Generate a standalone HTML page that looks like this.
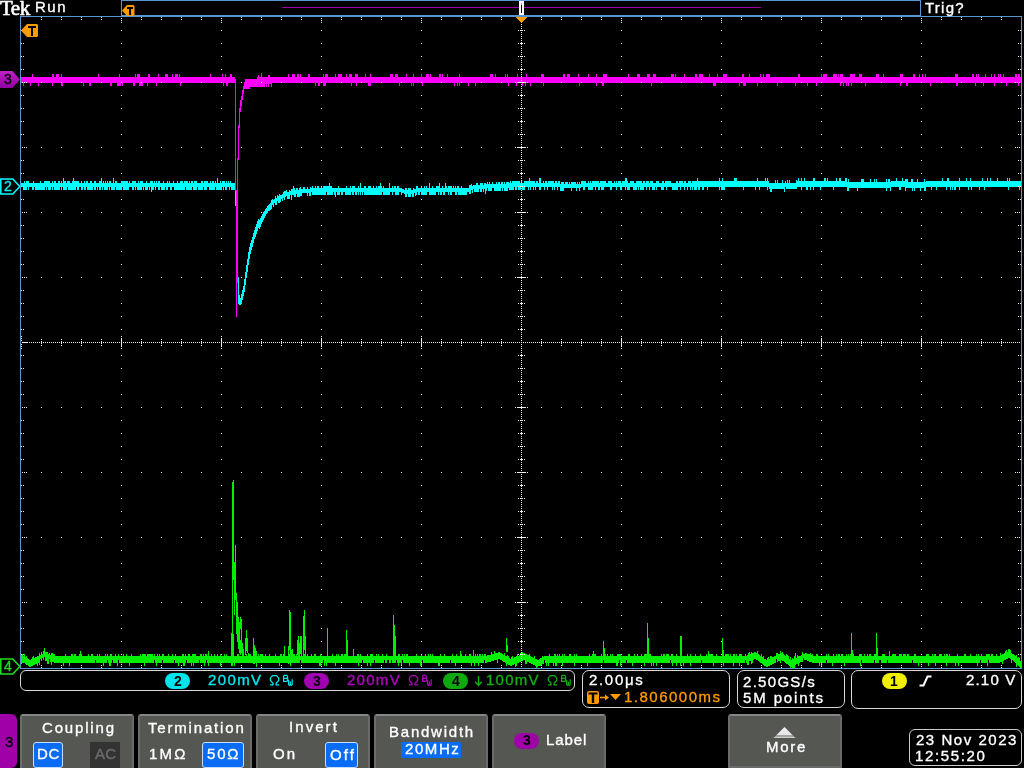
<!DOCTYPE html>
<html><head><meta charset="utf-8">
<style>
html,body{margin:0;padding:0;background:#000;}
body{width:1024px;height:768px;overflow:hidden;position:relative;font-family:"Liberation Sans",sans-serif;color:#fff;}
.t{position:absolute;white-space:nowrap;line-height:1;will-change:transform;}
.btn{position:absolute;top:714px;height:54px;width:114px;background:#555753;box-sizing:border-box;border-top:2px solid #868686;border-left:2px solid #6c6c6c;border-right:2px solid #6a6a6a;border-radius:3px 3px 0 0;}
.box{position:absolute;border:1px solid #d8d8d8;box-sizing:border-box;}
.pill{position:absolute;border-radius:8px;}
</style></head><body>
<svg width="1024" height="768" viewBox="0 0 1024 768" shape-rendering="crispEdges" style="position:absolute;left:0;top:0">
<path fill="#00ffff" d="M21 183v4h1v-4zM22 183v4h1v-4zM23 183v7h1v-7zM24 181v9h1v-9zM25 183v7h1v-7zM26 181v9h1v-9zM27 181v6h1v-6zM28 181v9h1v-9zM29 183v4h1v-4zM30 183v4h1v-4zM31 183v4h1v-4zM32 183v7h1v-7zM33 181v9h1v-9zM34 183v4h1v-4zM35 183v7h1v-7zM36 183v7h1v-7zM37 183v7h1v-7zM38 183v7h1v-7zM39 183v7h1v-7zM40 181v9h1v-9zM41 183v7h1v-7zM42 183v7h1v-7zM43 183v7h1v-7zM44 181v9h1v-9zM45 181v6h1v-6zM46 181v9h1v-9zM47 181v6h1v-6zM48 181v9h1v-9zM49 181v9h1v-9zM50 183v7h1v-7zM51 183v4h1v-4zM52 181v9h1v-9zM53 183v4h1v-4zM54 181v9h1v-9zM55 181v9h1v-9zM56 183v7h1v-7zM57 183v7h1v-7zM58 181v9h1v-9zM59 181v9h1v-9zM60 183v4h1v-4zM61 181v9h1v-9zM62 183v4h1v-4zM63 178v12h1v-12zM64 181v9h1v-9zM65 181v9h1v-9zM66 183v7h1v-7zM67 181v6h1v-6zM68 181v9h1v-9zM69 181v9h1v-9zM70 183v7h1v-7zM71 183v7h1v-7zM72 181v9h1v-9zM73 178v12h1v-12zM74 181v9h1v-9zM75 181v9h1v-9zM76 181v6h1v-6zM77 181v9h1v-9zM78 181v9h1v-9zM79 183v4h1v-4zM80 183v4h1v-4zM81 181v9h1v-9zM82 183v7h1v-7zM83 183v4h1v-4zM84 181v9h1v-9zM85 183v7h1v-7zM86 181v6h1v-6zM87 181v9h1v-9zM88 183v7h1v-7zM89 183v7h1v-7zM90 181v9h1v-9zM91 181v9h1v-9zM92 183v7h1v-7zM93 183v4h1v-4zM94 181v9h1v-9zM95 181v9h1v-9zM96 183v4h1v-4zM97 183v7h1v-7zM98 183v4h1v-4zM99 181v9h1v-9zM100 181v9h1v-9zM101 178v9h1v-9zM102 183v7h1v-7zM103 181v6h1v-6zM104 183v7h1v-7zM105 181v9h1v-9zM106 183v7h1v-7zM107 181v9h1v-9zM108 183v4h1v-4zM109 181v9h1v-9zM110 181v6h1v-6zM111 183v7h1v-7zM112 183v7h1v-7zM113 178v12h1v-12zM114 183v7h1v-7zM115 181v6h1v-6zM116 181v9h1v-9zM117 183v7h1v-7zM118 183v7h1v-7zM119 183v7h1v-7zM120 183v7h1v-7zM121 181v9h1v-9zM122 181v6h1v-6zM123 181v9h1v-9zM124 181v9h1v-9zM125 181v9h1v-9zM126 181v9h1v-9zM127 181v9h1v-9zM128 183v7h1v-7zM129 181v6h1v-6zM130 183v4h1v-4zM131 183v4h1v-4zM132 181v9h1v-9zM133 181v9h1v-9zM134 181v6h1v-6zM135 181v9h1v-9zM136 183v4h1v-4zM137 183v7h1v-7zM138 181v9h1v-9zM139 183v7h1v-7zM140 181v9h1v-9zM141 181v9h1v-9zM142 181v6h1v-6zM143 183v7h1v-7zM144 183v4h1v-4zM145 183v7h1v-7zM146 181v9h1v-9zM147 183v7h1v-7zM148 183v4h1v-4zM149 183v7h1v-7zM150 181v6h1v-6zM151 181v11h1v-11zM152 181v9h1v-9zM153 183v7h1v-7zM154 181v6h1v-6zM155 183v7h1v-7zM156 181v6h1v-6zM157 183v4h1v-4zM158 181v9h1v-9zM159 181v9h1v-9zM160 183v4h1v-4zM161 183v7h1v-7zM162 183v7h1v-7zM163 181v9h1v-9zM164 183v7h1v-7zM165 183v4h1v-4zM166 183v7h1v-7zM167 181v9h1v-9zM168 183v4h1v-4zM169 181v6h1v-6zM170 183v7h1v-7zM171 183v7h1v-7zM172 183v4h1v-4zM173 181v6h1v-6zM174 183v7h1v-7zM175 183v7h1v-7zM176 183v7h1v-7zM177 181v9h1v-9zM178 183v7h1v-7zM179 183v7h1v-7zM180 181v9h1v-9zM181 181v9h1v-9zM182 181v9h1v-9zM183 183v7h1v-7zM184 181v9h1v-9zM185 181v6h1v-6zM186 181v9h1v-9zM187 181v9h1v-9zM188 183v7h1v-7zM189 181v9h1v-9zM190 183v7h1v-7zM191 181v9h1v-9zM192 181v6h1v-6zM193 183v7h1v-7zM194 181v9h1v-9zM195 181v9h1v-9zM196 181v9h1v-9zM197 183v4h1v-4zM198 183v7h1v-7zM199 183v7h1v-7zM200 183v7h1v-7zM201 181v9h1v-9zM202 181v9h1v-9zM203 183v4h1v-4zM204 181v9h1v-9zM205 181v9h1v-9zM206 181v9h1v-9zM207 181v6h1v-6zM208 183v4h1v-4zM209 183v7h1v-7zM210 181v9h1v-9zM211 183v7h1v-7zM212 181v9h1v-9zM213 181v9h1v-9zM214 183v7h1v-7zM215 181v6h1v-6zM216 183v7h1v-7zM217 178v12h1v-12zM218 183v7h1v-7zM219 183v7h1v-7zM220 181v9h1v-9zM221 183v7h1v-7zM222 181v6h1v-6zM223 181v9h1v-9zM224 181v6h1v-6zM225 183v7h1v-7zM226 181v9h1v-9zM227 183v4h1v-4zM228 181v6h1v-6zM229 183v7h1v-7zM230 181v6h1v-6zM231 183v7h1v-7zM232 183v7h1v-7zM233 183v7h1v-7zM234 183v7h1v-7zM235 186v20h1v-20zM238 277v27h1v-27zM239 295v10h1v-10zM240 298v7h1v-7zM241 294v10h1v-10zM242 290v10h1v-10zM243 286v10h1v-10zM244 279v13h1v-13zM245 272v13h1v-13zM246 265v13h1v-13zM247 259v13h1v-13zM248 252v13h1v-13zM249 247v12h1v-12zM250 243v11h1v-11zM251 240v10h1v-10zM252 237v10h1v-10zM253 233v10h1v-10zM254 230v9h1v-9zM255 227v10h1v-10zM256 224v10h1v-10zM257 221v10h1v-10zM258 219v9h1v-9zM259 220v9h1v-9zM260 218v9h1v-9zM261 216v8h1v-8zM262 214v8h1v-8zM263 212v8h1v-8zM264 211v7h1v-7zM265 209v7h1v-7zM266 208v6h1v-6zM267 206v7h1v-7zM268 205v6h1v-6zM269 204v7h1v-7zM270 203v7h1v-7zM271 200v9h1v-9zM272 199v6h1v-6zM273 200v7h1v-7zM274 199v4h1v-4zM275 196v9h1v-9zM276 198v7h1v-7zM277 195v6h1v-6zM278 196v7h1v-7zM279 194v9h1v-9zM280 195v7h1v-7zM281 195v4h1v-4zM282 194v7h1v-7zM283 192v6h1v-6zM284 191v9h1v-9zM285 191v6h1v-6zM286 190v6h1v-6zM287 192v7h1v-7zM288 192v7h1v-7zM289 190v9h1v-9zM290 191v4h1v-4zM291 189v11h1v-11zM292 189v6h1v-6zM293 186v9h1v-9zM294 188v9h1v-9zM295 190v7h1v-7zM296 188v6h1v-6zM297 188v9h1v-9zM298 190v7h1v-7zM299 188v9h1v-9zM300 187v9h1v-9zM301 189v7h1v-7zM302 189v4h1v-4zM303 187v6h1v-6zM304 187v6h1v-6zM305 189v4h1v-4zM306 189v4h1v-4zM307 187v9h1v-9zM308 189v4h1v-4zM309 189v7h1v-7zM310 187v9h1v-9zM311 188v4h1v-4zM312 186v9h1v-9zM313 188v7h1v-7zM314 188v7h1v-7zM315 186v9h1v-9zM316 188v7h1v-7zM317 186v9h1v-9zM318 186v9h1v-9zM319 188v7h1v-7zM320 188v7h1v-7zM321 186v9h1v-9zM322 188v7h1v-7zM323 186v9h1v-9zM324 186v9h1v-9zM325 186v9h1v-9zM326 186v6h1v-6zM327 186v9h1v-9zM328 186v9h1v-9zM329 183v12h1v-12zM330 186v9h1v-9zM331 186v9h1v-9zM332 188v7h1v-7zM333 188v4h1v-4zM334 188v7h1v-7zM335 188v9h1v-9zM336 188v4h1v-4zM337 188v7h1v-7zM338 186v9h1v-9zM339 188v7h1v-7zM340 188v4h1v-4zM341 188v7h1v-7zM342 188v7h1v-7zM343 188v4h1v-4zM344 188v4h1v-4zM345 188v7h1v-7zM346 186v9h1v-9zM347 188v7h1v-7zM348 188v7h1v-7zM349 188v7h1v-7zM350 186v9h1v-9zM351 188v4h1v-4zM352 186v9h1v-9zM353 186v9h1v-9zM354 186v6h1v-6zM355 188v7h1v-7zM356 188v7h1v-7zM357 188v4h1v-4zM358 186v9h1v-9zM359 188v4h1v-4zM360 183v12h1v-12zM361 188v4h1v-4zM362 188v7h1v-7zM363 188v4h1v-4zM364 186v9h1v-9zM365 186v9h1v-9zM366 188v7h1v-7zM367 188v7h1v-7zM368 186v9h1v-9zM369 186v9h1v-9zM370 186v9h1v-9zM371 188v7h1v-7zM372 188v7h1v-7zM373 186v9h1v-9zM374 188v7h1v-7zM375 188v7h1v-7zM376 186v9h1v-9zM377 188v7h1v-7zM378 186v9h1v-9zM379 186v9h1v-9zM380 183v12h1v-12zM381 186v9h1v-9zM382 188v4h1v-4zM383 186v9h1v-9zM384 188v7h1v-7zM385 188v7h1v-7zM386 188v7h1v-7zM387 188v7h1v-7zM388 188v7h1v-7zM389 183v12h1v-12zM390 188v4h1v-4zM391 188v4h1v-4zM392 186v9h1v-9zM393 188v4h1v-4zM394 186v6h1v-6zM395 186v9h1v-9zM396 188v7h1v-7zM397 186v9h1v-9zM398 186v9h1v-9zM399 188v4h1v-4zM400 188v4h1v-4zM401 188v7h1v-7zM402 189v4h1v-4zM403 189v4h1v-4zM404 190v4h1v-4zM405 188v9h1v-9zM406 188v9h1v-9zM407 190v4h1v-4zM408 188v9h1v-9zM409 188v9h1v-9zM410 188v9h1v-9zM411 190v4h1v-4zM412 190v7h1v-7zM413 188v9h1v-9zM414 189v4h1v-4zM415 189v7h1v-7zM416 186v9h1v-9zM417 186v6h1v-6zM418 188v7h1v-7zM419 188v7h1v-7zM420 188v4h1v-4zM421 186v9h1v-9zM422 188v7h1v-7zM423 188v7h1v-7zM424 186v9h1v-9zM425 188v7h1v-7zM426 186v9h1v-9zM427 188v4h1v-4zM428 188v4h1v-4zM429 183v12h1v-12zM430 188v7h1v-7zM431 188v7h1v-7zM432 186v9h1v-9zM433 188v7h1v-7zM434 188v7h1v-7zM435 188v7h1v-7zM436 186v6h1v-6zM437 186v6h1v-6zM438 186v9h1v-9zM439 183v9h1v-9zM440 188v7h1v-7zM441 188v7h1v-7zM442 186v6h1v-6zM443 188v7h1v-7zM444 188v7h1v-7zM445 183v9h1v-9zM446 186v6h1v-6zM447 188v4h1v-4zM448 186v9h1v-9zM449 186v6h1v-6zM450 186v9h1v-9zM451 186v9h1v-9zM452 188v4h1v-4zM453 186v6h1v-6zM454 188v4h1v-4zM455 186v9h1v-9zM456 188v7h1v-7zM457 186v6h1v-6zM458 186v9h1v-9zM459 188v7h1v-7zM460 188v7h1v-7zM461 186v9h1v-9zM462 188v7h1v-7zM463 188v7h1v-7zM464 188v7h1v-7zM465 188v7h1v-7zM466 188v7h1v-7zM467 188v4h1v-4zM468 188v4h1v-4zM469 185v9h1v-9zM470 185v9h1v-9zM471 184v6h1v-6zM472 186v7h1v-7zM473 185v4h1v-4zM474 185v7h1v-7zM475 185v7h1v-7zM476 183v9h1v-9zM477 183v9h1v-9zM478 185v7h1v-7zM479 185v4h1v-4zM480 183v9h1v-9zM481 183v9h1v-9zM482 183v6h1v-6zM483 185v7h1v-7zM484 183v6h1v-6zM485 183v11h1v-11zM486 184v7h1v-7zM487 182v6h1v-6zM488 184v7h1v-7zM489 182v9h1v-9zM490 184v7h1v-7zM491 184v7h1v-7zM492 182v6h1v-6zM493 184v4h1v-4zM494 184v7h1v-7zM495 184v7h1v-7zM496 182v9h1v-9zM497 184v7h1v-7zM498 182v9h1v-9zM499 182v9h1v-9zM500 184v7h1v-7zM501 182v6h1v-6zM502 182v9h1v-9zM503 184v4h1v-4zM504 182v9h1v-9zM505 184v7h1v-7zM506 182v9h1v-9zM507 182v9h1v-9zM508 182v6h1v-6zM509 183v7h1v-7zM510 181v9h1v-9zM511 183v7h1v-7zM512 181v9h1v-9zM513 181v9h1v-9zM514 181v6h1v-6zM515 181v9h1v-9zM516 181v9h1v-9zM517 181v6h1v-6zM518 181v9h1v-9zM519 181v9h1v-9zM520 183v7h1v-7zM521 181v6h1v-6zM522 183v7h1v-7zM523 183v7h1v-7zM524 181v9h1v-9zM525 181v6h1v-6zM526 181v6h1v-6zM527 181v6h1v-6zM528 181v9h1v-9zM529 178v9h1v-9zM530 181v9h1v-9zM531 181v6h1v-6zM532 181v6h1v-6zM533 181v9h1v-9zM534 181v6h1v-6zM535 183v7h1v-7zM536 181v6h1v-6zM537 181v6h1v-6zM538 183v4h1v-4zM539 178v12h1v-12zM540 178v12h1v-12zM541 183v4h1v-4zM542 183v4h1v-4zM543 181v6h1v-6zM544 183v7h1v-7zM545 181v6h1v-6zM546 181v6h1v-6zM547 183v7h1v-7zM548 181v6h1v-6zM549 181v6h1v-6zM550 181v6h1v-6zM551 181v6h1v-6zM552 181v9h1v-9zM553 181v6h1v-6zM554 183v7h1v-7zM555 181v6h1v-6zM556 181v6h1v-6zM557 183v7h1v-7zM558 181v6h1v-6zM559 181v6h1v-6zM560 184v7h1v-7zM561 182v9h1v-9zM562 182v9h1v-9zM563 182v9h1v-9zM564 184v4h1v-4zM565 182v6h1v-6zM566 182v6h1v-6zM567 182v6h1v-6zM568 184v4h1v-4zM569 182v6h1v-6zM570 184v4h1v-4zM571 182v9h1v-9zM572 182v6h1v-6zM573 182v6h1v-6zM574 182v6h1v-6zM575 182v6h1v-6zM576 184v7h1v-7zM577 182v6h1v-6zM578 184v4h1v-4zM579 182v9h1v-9zM580 184v4h1v-4zM581 181v6h1v-6zM582 181v6h1v-6zM583 181v9h1v-9zM584 181v9h1v-9zM585 181v6h1v-6zM586 183v4h1v-4zM587 183v4h1v-4zM588 181v9h1v-9zM589 183v7h1v-7zM590 181v9h1v-9zM591 183v7h1v-7zM592 181v9h1v-9zM593 181v6h1v-6zM594 181v6h1v-6zM595 181v9h1v-9zM596 181v6h1v-6zM597 181v6h1v-6zM598 181v9h1v-9zM599 183v7h1v-7zM600 181v6h1v-6zM601 181v9h1v-9zM602 181v9h1v-9zM603 181v9h1v-9zM604 181v6h1v-6zM605 181v6h1v-6zM606 183v4h1v-4zM607 183v4h1v-4zM608 181v6h1v-6zM609 181v6h1v-6zM610 181v9h1v-9zM611 181v9h1v-9zM612 183v4h1v-4zM613 183v4h1v-4zM614 181v6h1v-6zM615 183v4h1v-4zM616 181v9h1v-9zM617 183v4h1v-4zM618 181v6h1v-6zM619 181v6h1v-6zM620 181v9h1v-9zM621 183v7h1v-7zM622 181v6h1v-6zM623 181v6h1v-6zM624 181v6h1v-6zM625 178v12h1v-12zM626 178v9h1v-9zM627 181v9h1v-9zM628 183v7h1v-7zM629 183v7h1v-7zM630 181v6h1v-6zM631 181v6h1v-6zM632 181v6h1v-6zM633 181v9h1v-9zM634 183v7h1v-7zM635 183v7h1v-7zM636 181v9h1v-9zM637 181v6h1v-6zM638 181v9h1v-9zM639 181v6h1v-6zM640 181v9h1v-9zM641 181v9h1v-9zM642 183v7h1v-7zM643 181v9h1v-9zM644 181v6h1v-6zM645 183v4h1v-4zM646 181v9h1v-9zM647 181v6h1v-6zM648 181v6h1v-6zM649 183v7h1v-7zM650 181v6h1v-6zM651 181v6h1v-6zM652 181v9h1v-9zM653 183v7h1v-7zM654 183v7h1v-7zM655 183v4h1v-4zM656 181v9h1v-9zM657 181v6h1v-6zM658 181v6h1v-6zM659 183v4h1v-4zM660 183v4h1v-4zM661 183v7h1v-7zM662 181v9h1v-9zM663 181v9h1v-9zM664 183v4h1v-4zM665 181v6h1v-6zM666 181v9h1v-9zM667 181v6h1v-6zM668 181v6h1v-6zM669 181v6h1v-6zM670 181v6h1v-6zM671 183v4h1v-4zM672 183v7h1v-7zM673 183v7h1v-7zM674 183v7h1v-7zM675 183v7h1v-7zM676 181v9h1v-9zM677 181v9h1v-9zM678 183v4h1v-4zM679 181v6h1v-6zM680 181v9h1v-9zM681 181v6h1v-6zM682 181v6h1v-6zM683 183v4h1v-4zM684 181v9h1v-9zM685 181v6h1v-6zM686 183v4h1v-4zM687 183v7h1v-7zM688 181v6h1v-6zM689 181v6h1v-6zM690 181v9h1v-9zM691 183v4h1v-4zM692 181v9h1v-9zM693 181v6h1v-6zM694 181v9h1v-9zM695 181v9h1v-9zM696 181v9h1v-9zM697 178v9h1v-9zM698 181v9h1v-9zM699 181v9h1v-9zM700 181v6h1v-6zM701 181v6h1v-6zM702 181v9h1v-9zM703 181v9h1v-9zM704 181v6h1v-6zM705 181v6h1v-6zM706 181v6h1v-6zM707 181v9h1v-9zM708 181v6h1v-6zM709 181v6h1v-6zM710 181v6h1v-6zM711 181v6h1v-6zM712 181v6h1v-6zM713 181v6h1v-6zM714 181v6h1v-6zM715 181v6h1v-6zM716 181v6h1v-6zM717 181v6h1v-6zM718 181v6h1v-6zM719 178v12h1v-12zM720 181v6h1v-6zM721 181v9h1v-9zM722 178v12h1v-12zM723 181v9h1v-9zM724 181v9h1v-9zM725 181v6h1v-6zM726 181v6h1v-6zM727 181v6h1v-6zM728 181v6h1v-6zM729 181v6h1v-6zM730 181v6h1v-6zM731 181v6h1v-6zM732 181v6h1v-6zM733 181v6h1v-6zM734 178v9h1v-9zM735 178v9h1v-9zM736 178v9h1v-9zM737 181v6h1v-6zM738 181v6h1v-6zM739 181v6h1v-6zM740 181v6h1v-6zM741 181v6h1v-6zM742 181v6h1v-6zM743 181v9h1v-9zM744 181v6h1v-6zM745 181v6h1v-6zM746 181v6h1v-6zM747 181v6h1v-6zM748 181v6h1v-6zM749 181v6h1v-6zM750 181v6h1v-6zM751 181v6h1v-6zM752 181v6h1v-6zM753 181v6h1v-6zM754 181v6h1v-6zM755 181v9h1v-9zM756 181v6h1v-6zM757 178v9h1v-9zM758 181v6h1v-6zM759 181v9h1v-9zM760 181v6h1v-6zM761 181v6h1v-6zM762 181v6h1v-6zM763 181v6h1v-6zM764 181v6h1v-6zM765 178v9h1v-9zM766 181v6h1v-6zM767 178v12h1v-12zM768 181v6h1v-6zM769 183v6h1v-6zM770 183v9h1v-9zM771 183v9h1v-9zM772 183v6h1v-6zM773 183v6h1v-6zM774 183v6h1v-6zM775 180v9h1v-9zM776 183v6h1v-6zM777 180v9h1v-9zM778 183v6h1v-6zM779 183v6h1v-6zM780 183v6h1v-6zM781 183v6h1v-6zM782 180v9h1v-9zM783 183v6h1v-6zM784 183v9h1v-9zM785 181v6h1v-6zM786 183v6h1v-6zM787 180v9h1v-9zM788 183v6h1v-6zM789 180v9h1v-9zM790 183v6h1v-6zM791 183v6h1v-6zM792 183v6h1v-6zM793 183v6h1v-6zM794 183v6h1v-6zM795 183v6h1v-6zM796 180v9h1v-9zM797 181v6h1v-6zM798 178v9h1v-9zM799 181v6h1v-6zM800 181v6h1v-6zM801 178v12h1v-12zM802 181v6h1v-6zM803 181v6h1v-6zM804 178v9h1v-9zM805 181v6h1v-6zM806 181v9h1v-9zM807 181v9h1v-9zM808 181v6h1v-6zM809 181v6h1v-6zM810 181v9h1v-9zM811 181v6h1v-6zM812 181v6h1v-6zM813 178v12h1v-12zM814 178v9h1v-9zM815 181v6h1v-6zM816 181v6h1v-6zM817 181v6h1v-6zM818 181v6h1v-6zM819 181v6h1v-6zM820 181v9h1v-9zM821 181v6h1v-6zM822 181v6h1v-6zM823 181v6h1v-6zM824 178v9h1v-9zM825 178v9h1v-9zM826 181v6h1v-6zM827 178v9h1v-9zM828 181v6h1v-6zM829 181v6h1v-6zM830 181v6h1v-6zM831 181v6h1v-6zM832 181v6h1v-6zM833 181v9h1v-9zM834 181v6h1v-6zM835 181v6h1v-6zM836 178v9h1v-9zM837 181v6h1v-6zM838 181v6h1v-6zM839 178v9h1v-9zM840 178v9h1v-9zM841 181v6h1v-6zM842 181v6h1v-6zM843 181v6h1v-6zM844 181v6h1v-6zM845 178v9h1v-9zM846 178v9h1v-9zM847 182v9h1v-9zM848 179v12h1v-12zM849 182v6h1v-6zM850 182v6h1v-6zM851 182v6h1v-6zM852 182v6h1v-6zM853 182v6h1v-6zM854 182v6h1v-6zM855 182v6h1v-6zM856 182v6h1v-6zM857 182v9h1v-9zM858 182v6h1v-6zM859 182v6h1v-6zM860 182v6h1v-6zM861 179v9h1v-9zM862 179v9h1v-9zM863 179v9h1v-9zM864 182v6h1v-6zM865 182v6h1v-6zM866 182v6h1v-6zM867 182v6h1v-6zM868 182v6h1v-6zM869 182v6h1v-6zM870 179v9h1v-9zM871 182v6h1v-6zM872 182v6h1v-6zM873 182v6h1v-6zM874 179v9h1v-9zM875 182v6h1v-6zM876 179v9h1v-9zM877 182v6h1v-6zM878 182v6h1v-6zM879 182v6h1v-6zM880 182v6h1v-6zM881 182v6h1v-6zM882 182v6h1v-6zM883 182v6h1v-6zM884 182v6h1v-6zM885 182v6h1v-6zM886 179v12h1v-12zM887 182v6h1v-6zM888 179v9h1v-9zM889 179v9h1v-9zM890 182v9h1v-9zM891 181v6h1v-6zM892 181v6h1v-6zM893 181v6h1v-6zM894 181v6h1v-6zM895 181v6h1v-6zM896 178v9h1v-9zM897 181v6h1v-6zM898 181v6h1v-6zM899 181v9h1v-9zM900 181v9h1v-9zM901 181v6h1v-6zM902 178v9h1v-9zM903 181v6h1v-6zM904 181v6h1v-6zM905 179v12h1v-12zM906 179v9h1v-9zM907 179v9h1v-9zM908 182v6h1v-6zM909 182v6h1v-6zM910 182v6h1v-6zM911 179v9h1v-9zM912 179v12h1v-12zM913 182v6h1v-6zM914 182v9h1v-9zM915 182v6h1v-6zM916 182v6h1v-6zM917 179v9h1v-9zM918 182v6h1v-6zM919 182v6h1v-6zM920 182v9h1v-9zM921 182v6h1v-6zM922 182v6h1v-6zM923 182v6h1v-6zM924 179v12h1v-12zM925 182v9h1v-9zM926 181v6h1v-6zM927 181v6h1v-6zM928 181v6h1v-6zM929 181v6h1v-6zM930 181v6h1v-6zM931 181v9h1v-9zM932 181v6h1v-6zM933 181v6h1v-6zM934 181v6h1v-6zM935 181v6h1v-6zM936 181v9h1v-9zM937 181v6h1v-6zM938 181v6h1v-6zM939 181v6h1v-6zM940 181v6h1v-6zM941 181v6h1v-6zM942 178v9h1v-9zM943 181v6h1v-6zM944 181v6h1v-6zM945 181v6h1v-6zM946 181v9h1v-9zM947 178v9h1v-9zM948 178v9h1v-9zM949 181v6h1v-6zM950 181v9h1v-9zM951 181v6h1v-6zM952 181v9h1v-9zM953 181v6h1v-6zM954 181v9h1v-9zM955 181v9h1v-9zM956 181v6h1v-6zM957 181v6h1v-6zM958 181v6h1v-6zM959 178v12h1v-12zM960 181v6h1v-6zM961 181v6h1v-6zM962 181v6h1v-6zM963 181v6h1v-6zM964 181v6h1v-6zM965 181v6h1v-6zM966 178v9h1v-9zM967 181v6h1v-6zM968 181v9h1v-9zM969 181v6h1v-6zM970 178v9h1v-9zM971 181v9h1v-9zM972 181v6h1v-6zM973 181v6h1v-6zM974 181v6h1v-6zM975 181v6h1v-6zM976 181v6h1v-6zM977 181v6h1v-6zM978 181v6h1v-6zM979 181v9h1v-9zM980 181v6h1v-6zM981 181v6h1v-6zM982 178v9h1v-9zM983 181v6h1v-6zM984 181v9h1v-9zM985 181v6h1v-6zM986 181v6h1v-6zM987 178v9h1v-9zM988 181v6h1v-6zM989 181v6h1v-6zM990 178v9h1v-9zM991 181v6h1v-6zM992 181v6h1v-6zM993 181v6h1v-6zM994 181v6h1v-6zM995 181v6h1v-6zM996 181v6h1v-6zM997 178v9h1v-9zM998 181v6h1v-6zM999 181v6h1v-6zM1000 181v6h1v-6zM1001 181v6h1v-6zM1002 181v6h1v-6zM1003 181v6h1v-6zM1004 181v6h1v-6zM1005 181v6h1v-6zM1006 181v6h1v-6zM1007 178v9h1v-9zM1008 181v9h1v-9zM1009 178v9h1v-9zM1010 181v6h1v-6zM1011 181v6h1v-6zM1012 181v6h1v-6zM1013 181v6h1v-6zM1014 181v6h1v-6zM1015 181v6h1v-6zM1016 181v6h1v-6zM1017 181v6h1v-6zM1018 181v6h1v-6zM1019 181v9h1v-9zM1020 181v6h1v-6z"/>
<path fill="#ff00ff" d="M261 73h1v1h-1zM32 74h1v1h-1zM52 74h2v1h-2zM56 74h3v1h-3zM61 74h1v1h-1zM98 74h1v1h-1zM119 74h1v1h-1zM135 74h1v1h-1zM137 74h3v1h-3zM148 74h2v1h-2zM158 74h1v1h-1zM165 74h3v1h-3zM172 74h1v1h-1zM175 74h3v1h-3zM179 74h1v1h-1zM210 74h1v1h-1zM222 74h1v1h-1zM225 74h1v1h-1zM230 74h2v1h-2zM261 74h1v1h-1zM288 74h1v1h-1zM292 74h3v1h-3zM297 74h2v1h-2zM300 74h1v1h-1zM308 74h2v1h-2zM323 74h1v1h-1zM325 74h3v1h-3zM335 74h1v1h-1zM338 74h4v1h-4zM346 74h1v1h-1zM349 74h3v1h-3zM355 74h3v1h-3zM365 74h1v1h-1zM370 74h1v1h-1zM390 74h3v1h-3zM395 74h3v1h-3zM406 74h1v1h-1zM413 74h1v1h-1zM421 74h1v1h-1zM426 74h3v1h-3zM430 74h1v1h-1zM439 74h2v1h-2zM442 74h1v1h-1zM447 74h1v1h-1zM459 74h1v1h-1zM490 74h3v1h-3zM495 74h1v1h-1zM505 74h1v1h-1zM507 74h1v1h-1zM517 74h1v1h-1zM526 74h1v1h-1zM541 74h3v1h-3zM563 74h2v1h-2zM567 74h3v1h-3zM578 74h1v1h-1zM588 74h1v1h-1zM596 74h1v1h-1zM603 74h4v1h-4zM628 74h1v1h-1zM637 74h3v1h-3zM647 74h3v1h-3zM653 74h3v1h-3zM671 74h3v1h-3zM675 74h1v1h-1zM684 74h1v1h-1zM695 74h2v1h-2zM699 74h4v1h-4zM709 74h1v1h-1zM717 74h1v1h-1zM723 74h4v1h-4zM742 74h2v1h-2zM749 74h1v1h-1zM760 74h1v1h-1zM763 74h1v1h-1zM766 74h4v1h-4zM798 74h2v1h-2zM821 74h1v1h-1zM823 74h4v1h-4zM833 74h4v1h-4zM838 74h1v1h-1zM840 74h3v1h-3zM850 74h5v1h-5zM859 74h3v1h-3zM876 74h3v1h-3zM883 74h1v1h-1zM900 74h3v1h-3zM913 74h2v1h-2zM919 74h1v1h-1zM922 74h1v1h-1zM925 74h1v1h-1zM955 74h3v1h-3zM972 74h2v1h-2zM976 74h1v1h-1zM978 74h1v1h-1zM985 74h1v1h-1zM991 74h1v1h-1zM994 74h1v1h-1zM998 74h1v1h-1zM1000 74h1v1h-1zM1003 74h1v1h-1zM1015 74h2v1h-2zM1018 74h2v1h-2zM32 75h1v1h-1zM52 75h2v1h-2zM56 75h3v1h-3zM61 75h1v1h-1zM98 75h1v1h-1zM119 75h1v1h-1zM135 75h1v1h-1zM137 75h3v1h-3zM148 75h2v1h-2zM158 75h1v1h-1zM165 75h3v1h-3zM172 75h1v1h-1zM175 75h3v1h-3zM179 75h1v1h-1zM210 75h1v1h-1zM222 75h1v1h-1zM225 75h1v1h-1zM230 75h2v1h-2zM258 75h1v1h-1zM261 75h1v1h-1zM268 75h2v1h-2zM288 75h1v1h-1zM292 75h3v1h-3zM297 75h2v1h-2zM300 75h1v1h-1zM308 75h2v1h-2zM323 75h1v1h-1zM325 75h3v1h-3zM335 75h1v1h-1zM338 75h4v1h-4zM346 75h1v1h-1zM349 75h3v1h-3zM355 75h3v1h-3zM365 75h1v1h-1zM370 75h1v1h-1zM390 75h3v1h-3zM395 75h3v1h-3zM406 75h1v1h-1zM413 75h1v1h-1zM421 75h1v1h-1zM426 75h3v1h-3zM430 75h1v1h-1zM439 75h2v1h-2zM442 75h1v1h-1zM447 75h1v1h-1zM459 75h1v1h-1zM490 75h3v1h-3zM495 75h1v1h-1zM505 75h1v1h-1zM507 75h1v1h-1zM517 75h1v1h-1zM526 75h1v1h-1zM541 75h3v1h-3zM563 75h2v1h-2zM567 75h3v1h-3zM578 75h1v1h-1zM588 75h1v1h-1zM596 75h1v1h-1zM603 75h4v1h-4zM628 75h1v1h-1zM637 75h3v1h-3zM647 75h3v1h-3zM653 75h3v1h-3zM671 75h3v1h-3zM675 75h1v1h-1zM684 75h1v1h-1zM695 75h2v1h-2zM699 75h4v1h-4zM709 75h1v1h-1zM717 75h1v1h-1zM723 75h4v1h-4zM742 75h2v1h-2zM749 75h1v1h-1zM760 75h1v1h-1zM763 75h1v1h-1zM766 75h4v1h-4zM798 75h2v1h-2zM821 75h1v1h-1zM823 75h4v1h-4zM833 75h4v1h-4zM838 75h1v1h-1zM840 75h3v1h-3zM850 75h5v1h-5zM859 75h3v1h-3zM876 75h3v1h-3zM883 75h1v1h-1zM900 75h3v1h-3zM913 75h2v1h-2zM919 75h1v1h-1zM922 75h1v1h-1zM925 75h1v1h-1zM955 75h3v1h-3zM972 75h2v1h-2zM976 75h1v1h-1zM978 75h1v1h-1zM985 75h1v1h-1zM991 75h1v1h-1zM994 75h1v1h-1zM998 75h1v1h-1zM1000 75h1v1h-1zM1003 75h1v1h-1zM1015 75h2v1h-2zM1018 75h2v1h-2zM32 76h1v1h-1zM52 76h2v1h-2zM56 76h3v1h-3zM61 76h1v1h-1zM98 76h1v1h-1zM119 76h1v1h-1zM135 76h1v1h-1zM137 76h3v1h-3zM148 76h2v1h-2zM158 76h1v1h-1zM165 76h3v1h-3zM172 76h1v1h-1zM175 76h3v1h-3zM179 76h1v1h-1zM210 76h1v1h-1zM222 76h1v1h-1zM225 76h1v1h-1zM230 76h2v1h-2zM258 76h1v1h-1zM261 76h1v1h-1zM268 76h2v1h-2zM288 76h1v1h-1zM292 76h3v1h-3zM297 76h2v1h-2zM300 76h1v1h-1zM308 76h2v1h-2zM323 76h1v1h-1zM325 76h3v1h-3zM335 76h1v1h-1zM338 76h4v1h-4zM346 76h1v1h-1zM349 76h3v1h-3zM355 76h3v1h-3zM365 76h1v1h-1zM370 76h1v1h-1zM390 76h3v1h-3zM395 76h3v1h-3zM406 76h1v1h-1zM413 76h1v1h-1zM421 76h1v1h-1zM426 76h3v1h-3zM430 76h1v1h-1zM439 76h2v1h-2zM442 76h1v1h-1zM447 76h1v1h-1zM459 76h1v1h-1zM490 76h3v1h-3zM495 76h1v1h-1zM505 76h1v1h-1zM507 76h1v1h-1zM517 76h1v1h-1zM526 76h1v1h-1zM541 76h3v1h-3zM563 76h2v1h-2zM567 76h3v1h-3zM578 76h1v1h-1zM588 76h1v1h-1zM596 76h1v1h-1zM603 76h4v1h-4zM628 76h1v1h-1zM637 76h3v1h-3zM647 76h3v1h-3zM653 76h3v1h-3zM671 76h3v1h-3zM675 76h1v1h-1zM684 76h1v1h-1zM695 76h2v1h-2zM699 76h4v1h-4zM709 76h1v1h-1zM717 76h1v1h-1zM723 76h4v1h-4zM742 76h2v1h-2zM749 76h1v1h-1zM760 76h1v1h-1zM763 76h1v1h-1zM766 76h4v1h-4zM798 76h2v1h-2zM821 76h1v1h-1zM823 76h4v1h-4zM833 76h4v1h-4zM838 76h1v1h-1zM840 76h3v1h-3zM850 76h5v1h-5zM859 76h3v1h-3zM876 76h3v1h-3zM883 76h1v1h-1zM900 76h3v1h-3zM913 76h2v1h-2zM919 76h1v1h-1zM922 76h1v1h-1zM925 76h1v1h-1zM955 76h3v1h-3zM972 76h2v1h-2zM976 76h1v1h-1zM978 76h1v1h-1zM985 76h1v1h-1zM991 76h1v1h-1zM994 76h1v1h-1zM998 76h1v1h-1zM1000 76h1v1h-1zM1003 76h1v1h-1zM1015 76h2v1h-2zM1018 76h2v1h-2zM21 77h214v1h-214zM257 77h764v1h-764zM21 78h214v1h-214zM257 78h764v1h-764zM21 79h215v1h-215zM245 79h776v1h-776zM21 80h215v1h-215zM245 80h776v1h-776zM21 81h215v1h-215zM245 81h776v1h-776zM21 82h215v1h-215zM244 82h777v1h-777zM23 83h1v1h-1zM30 83h1v1h-1zM38 83h1v1h-1zM52 83h1v1h-1zM61 83h2v1h-2zM83 83h1v1h-1zM89 83h2v1h-2zM110 83h2v1h-2zM117 83h4v1h-4zM122 83h1v1h-1zM133 83h2v1h-2zM139 83h4v1h-4zM147 83h1v1h-1zM156 83h1v1h-1zM180 83h1v1h-1zM223 83h1v1h-1zM226 83h2v1h-2zM235 83h1v1h-1zM244 83h28v1h-28zM315 83h1v1h-1zM318 83h2v1h-2zM323 83h3v1h-3zM351 83h1v1h-1zM356 83h1v1h-1zM368 83h3v1h-3zM399 83h1v1h-1zM411 83h1v1h-1zM413 83h1v1h-1zM422 83h1v1h-1zM454 83h1v1h-1zM457 83h1v1h-1zM459 83h1v1h-1zM468 83h1v1h-1zM475 83h1v1h-1zM508 83h1v1h-1zM516 83h1v1h-1zM522 83h1v1h-1zM525 83h1v1h-1zM530 83h1v1h-1zM543 83h1v1h-1zM579 83h1v1h-1zM596 83h1v1h-1zM602 83h2v1h-2zM651 83h1v1h-1zM713 83h3v1h-3zM739 83h1v1h-1zM743 83h3v1h-3zM757 83h1v1h-1zM777 83h1v1h-1zM795 83h1v1h-1zM807 83h1v1h-1zM816 83h1v1h-1zM840 83h1v1h-1zM843 83h1v1h-1zM846 83h1v1h-1zM848 83h1v1h-1zM851 83h1v1h-1zM865 83h1v1h-1zM900 83h1v1h-1zM906 83h2v1h-2zM930 83h1v1h-1zM956 83h2v1h-2zM975 83h1v1h-1zM983 83h1v1h-1zM994 83h1v1h-1zM1006 83h1v1h-1zM1018 83h1v1h-1zM23 84h1v1h-1zM30 84h1v1h-1zM38 84h1v1h-1zM52 84h1v1h-1zM61 84h2v1h-2zM83 84h1v1h-1zM89 84h2v1h-2zM110 84h2v1h-2zM117 84h4v1h-4zM122 84h1v1h-1zM133 84h2v1h-2zM139 84h4v1h-4zM147 84h1v1h-1zM156 84h1v1h-1zM180 84h1v1h-1zM223 84h1v1h-1zM226 84h2v1h-2zM235 84h1v1h-1zM244 84h21v1h-21zM266 84h1v1h-1zM268 84h1v1h-1zM271 84h1v1h-1zM315 84h1v1h-1zM318 84h2v1h-2zM323 84h3v1h-3zM351 84h1v1h-1zM356 84h1v1h-1zM368 84h3v1h-3zM399 84h1v1h-1zM411 84h1v1h-1zM413 84h1v1h-1zM422 84h1v1h-1zM454 84h1v1h-1zM457 84h1v1h-1zM459 84h1v1h-1zM468 84h1v1h-1zM475 84h1v1h-1zM508 84h1v1h-1zM516 84h1v1h-1zM522 84h1v1h-1zM525 84h1v1h-1zM530 84h1v1h-1zM543 84h1v1h-1zM579 84h1v1h-1zM596 84h1v1h-1zM602 84h2v1h-2zM651 84h1v1h-1zM713 84h3v1h-3zM739 84h1v1h-1zM743 84h3v1h-3zM757 84h1v1h-1zM777 84h1v1h-1zM795 84h1v1h-1zM807 84h1v1h-1zM816 84h1v1h-1zM840 84h1v1h-1zM843 84h1v1h-1zM846 84h1v1h-1zM848 84h1v1h-1zM851 84h1v1h-1zM865 84h1v1h-1zM900 84h1v1h-1zM906 84h2v1h-2zM930 84h1v1h-1zM956 84h2v1h-2zM975 84h1v1h-1zM983 84h1v1h-1zM994 84h1v1h-1zM1006 84h1v1h-1zM1018 84h1v1h-1zM23 85h1v1h-1zM30 85h1v1h-1zM38 85h1v1h-1zM52 85h1v1h-1zM61 85h2v1h-2zM83 85h1v1h-1zM89 85h2v1h-2zM110 85h2v1h-2zM117 85h4v1h-4zM122 85h1v1h-1zM133 85h2v1h-2zM139 85h4v1h-4zM147 85h1v1h-1zM156 85h1v1h-1zM180 85h1v1h-1zM223 85h1v1h-1zM226 85h2v1h-2zM235 85h1v1h-1zM244 85h21v1h-21zM266 85h1v1h-1zM268 85h1v1h-1zM271 85h1v1h-1zM315 85h1v1h-1zM318 85h2v1h-2zM323 85h3v1h-3zM351 85h1v1h-1zM356 85h1v1h-1zM368 85h3v1h-3zM399 85h1v1h-1zM411 85h1v1h-1zM413 85h1v1h-1zM422 85h1v1h-1zM454 85h1v1h-1zM457 85h1v1h-1zM459 85h1v1h-1zM468 85h1v1h-1zM475 85h1v1h-1zM508 85h1v1h-1zM516 85h1v1h-1zM522 85h1v1h-1zM525 85h1v1h-1zM530 85h1v1h-1zM543 85h1v1h-1zM579 85h1v1h-1zM596 85h1v1h-1zM602 85h2v1h-2zM651 85h1v1h-1zM713 85h3v1h-3zM739 85h1v1h-1zM743 85h3v1h-3zM757 85h1v1h-1zM777 85h1v1h-1zM795 85h1v1h-1zM807 85h1v1h-1zM816 85h1v1h-1zM840 85h1v1h-1zM843 85h1v1h-1zM846 85h1v1h-1zM848 85h1v1h-1zM851 85h1v1h-1zM865 85h1v1h-1zM900 85h1v1h-1zM906 85h2v1h-2zM930 85h1v1h-1zM956 85h2v1h-2zM975 85h1v1h-1zM983 85h1v1h-1zM994 85h1v1h-1zM1006 85h1v1h-1zM1018 85h1v1h-1zM235 86h1v1h-1zM243 86h22v1h-22zM266 86h1v1h-1zM268 86h1v1h-1zM271 86h1v1h-1zM235 87h1v1h-1zM243 87h7v1h-7zM235 88h1v1h-1zM243 88h7v1h-7zM235 89h1v1h-1zM243 89h1v1h-1zM235 90h1v1h-1zM242 90h2v1h-2zM235 91h1v1h-1zM242 91h2v1h-2zM235 92h1v1h-1zM242 92h2v1h-2zM235 93h1v1h-1zM242 93h2v1h-2zM235 94h1v1h-1zM242 94h1v1h-1zM235 95h1v1h-1zM242 95h1v1h-1zM235 96h1v1h-1zM241 96h2v1h-2zM235 97h1v1h-1zM241 97h2v1h-2zM235 98h1v1h-1zM241 98h2v1h-2zM235 99h1v1h-1zM241 99h2v1h-2zM235 100h1v1h-1zM240 100h2v1h-2zM235 101h1v1h-1zM240 101h2v1h-2zM235 102h1v1h-1zM240 102h2v1h-2zM235 103h1v1h-1zM240 103h2v1h-2zM235 104h1v1h-1zM240 104h2v1h-2zM235 105h1v1h-1zM240 105h2v1h-2zM235 106h1v1h-1zM240 106h1v1h-1zM235 107h1v1h-1zM240 107h1v1h-1zM235 108h1v1h-1zM239 108h2v1h-2zM235 109h1v1h-1zM239 109h2v1h-2zM235 110h1v1h-1zM239 110h2v1h-2zM235 111h1v1h-1zM239 111h2v1h-2zM235 112h1v1h-1zM239 112h1v1h-1zM235 113h1v1h-1zM239 113h1v1h-1zM235 114h1v1h-1zM239 114h1v1h-1zM235 115h1v1h-1zM239 115h1v1h-1zM235 116h1v1h-1zM239 116h1v1h-1zM235 117h1v1h-1zM239 117h1v1h-1zM235 118h1v1h-1zM239 118h1v1h-1zM235 119h1v1h-1zM239 119h1v1h-1zM235 120h1v1h-1zM239 120h1v1h-1zM235 121h1v1h-1zM239 121h1v1h-1zM235 122h1v1h-1zM239 122h1v1h-1zM235 123h1v1h-1zM239 123h1v1h-1zM235 124h1v1h-1zM239 124h1v1h-1zM235 125h1v1h-1zM238 125h2v1h-2zM235 126h1v1h-1zM238 126h2v1h-2zM235 127h1v1h-1zM238 127h2v1h-2zM235 128h1v1h-1zM238 128h1v1h-1zM235 129h1v1h-1zM238 129h1v1h-1zM235 130h1v1h-1zM238 130h1v1h-1zM235 131h1v1h-1zM238 131h1v1h-1zM235 132h1v1h-1zM238 132h1v1h-1zM235 133h1v1h-1zM238 133h1v1h-1zM235 134h1v1h-1zM238 134h1v1h-1zM235 135h1v1h-1zM238 135h1v1h-1zM235 136h1v1h-1zM238 136h1v1h-1zM235 137h1v1h-1zM238 137h1v1h-1zM235 138h1v1h-1zM238 138h1v1h-1zM235 139h1v1h-1zM238 139h1v1h-1zM235 140h1v1h-1zM238 140h1v1h-1zM235 141h1v1h-1zM238 141h1v1h-1zM235 142h1v1h-1zM238 142h1v1h-1zM235 143h1v1h-1zM238 143h1v1h-1zM235 144h1v1h-1zM238 144h1v1h-1zM235 145h1v1h-1zM238 145h1v1h-1zM235 146h1v1h-1zM238 146h1v1h-1zM235 147h1v1h-1zM238 147h1v1h-1zM235 148h1v1h-1zM238 148h1v1h-1zM235 149h1v1h-1zM238 149h1v1h-1zM235 150h1v1h-1zM238 150h1v1h-1zM235 151h1v1h-1zM238 151h1v1h-1zM235 152h1v1h-1zM238 152h1v1h-1zM235 153h1v1h-1zM238 153h1v1h-1zM235 154h1v1h-1zM238 154h1v1h-1zM235 155h1v1h-1zM238 155h1v1h-1zM235 156h1v1h-1zM238 156h1v1h-1zM235 157h1v1h-1zM238 157h1v1h-1zM235 158h1v1h-1zM237 158h2v1h-2zM235 159h1v1h-1zM237 159h2v1h-2zM235 160h1v1h-1zM237 160h1v1h-1zM235 161h1v1h-1zM237 161h1v1h-1zM235 162h1v1h-1zM237 162h1v1h-1zM235 163h1v1h-1zM237 163h1v1h-1zM235 164h1v1h-1zM237 164h1v1h-1zM235 165h1v1h-1zM237 165h1v1h-1zM235 166h1v1h-1zM237 166h1v1h-1zM235 167h1v1h-1zM237 167h1v1h-1zM235 168h1v1h-1zM237 168h1v1h-1zM235 169h1v1h-1zM237 169h1v1h-1zM235 170h1v1h-1zM237 170h1v1h-1zM235 171h1v1h-1zM237 171h1v1h-1zM235 172h1v1h-1zM237 172h1v1h-1zM235 173h1v1h-1zM237 173h1v1h-1zM235 174h1v1h-1zM237 174h1v1h-1zM235 175h1v1h-1zM237 175h1v1h-1zM235 176h1v1h-1zM237 176h1v1h-1zM235 177h1v1h-1zM237 177h1v1h-1zM235 178h1v1h-1zM237 178h1v1h-1zM235 179h1v1h-1zM237 179h1v1h-1zM235 180h1v1h-1zM237 180h1v1h-1zM235 181h1v1h-1zM237 181h1v1h-1zM235 182h1v1h-1zM237 182h1v1h-1zM235 183h1v1h-1zM237 183h1v1h-1zM235 184h1v1h-1zM237 184h1v1h-1zM235 185h1v1h-1zM237 185h1v1h-1zM235 186h1v1h-1zM237 186h1v1h-1zM235 187h1v1h-1zM237 187h1v1h-1zM235 188h1v1h-1zM237 188h1v1h-1zM235 189h1v1h-1zM237 189h1v1h-1zM235 190h3v1h-3zM236 191h2v1h-2zM236 192h2v1h-2zM236 193h2v1h-2zM236 194h2v1h-2zM236 195h2v1h-2zM236 196h2v1h-2zM236 197h2v1h-2zM236 198h2v1h-2zM236 199h2v1h-2zM236 200h2v1h-2zM236 201h2v1h-2zM236 202h2v1h-2zM236 203h2v1h-2zM236 204h2v1h-2zM236 205h2v1h-2zM236 206h2v1h-2zM236 207h2v1h-2zM236 208h2v1h-2zM236 209h2v1h-2zM236 210h2v1h-2zM236 211h2v1h-2zM236 212h2v1h-2zM236 213h2v1h-2zM236 214h2v1h-2zM236 215h2v1h-2zM236 216h2v1h-2zM236 217h2v1h-2zM236 218h2v1h-2zM236 219h2v1h-2zM236 220h2v1h-2zM236 221h2v1h-2zM236 222h2v1h-2zM236 223h2v1h-2zM236 224h2v1h-2zM236 225h2v1h-2zM236 226h2v1h-2zM236 227h2v1h-2zM236 228h2v1h-2zM236 229h2v1h-2zM236 230h2v1h-2zM236 231h2v1h-2zM236 232h2v1h-2zM236 233h2v1h-2zM236 234h2v1h-2zM236 235h2v1h-2zM236 236h2v1h-2zM236 237h2v1h-2zM236 238h2v1h-2zM236 239h2v1h-2zM236 240h2v1h-2zM236 241h2v1h-2zM236 242h2v1h-2zM236 243h2v1h-2zM236 244h2v1h-2zM236 245h2v1h-2zM236 246h2v1h-2zM236 247h2v1h-2zM236 248h2v1h-2zM236 249h2v1h-2zM236 250h2v1h-2zM236 251h2v1h-2zM236 252h2v1h-2zM236 253h2v1h-2zM236 254h2v1h-2zM236 255h2v1h-2zM236 256h2v1h-2zM236 257h2v1h-2zM236 258h2v1h-2zM236 259h2v1h-2zM236 260h2v1h-2zM236 261h2v1h-2zM236 262h2v1h-2zM236 263h2v1h-2zM236 264h2v1h-2zM236 265h2v1h-2zM236 266h2v1h-2zM236 267h2v1h-2zM236 268h2v1h-2zM236 269h2v1h-2zM236 270h2v1h-2zM236 271h2v1h-2zM236 272h2v1h-2zM236 273h2v1h-2zM236 274h2v1h-2zM236 275h2v1h-2zM236 276h2v1h-2zM236 277h2v1h-2zM236 278h2v1h-2zM236 279h2v1h-2zM236 280h2v1h-2zM236 281h2v1h-2zM236 282h2v1h-2zM236 283h1v1h-1zM236 284h1v1h-1zM236 285h1v1h-1zM236 286h1v1h-1zM236 287h1v1h-1zM236 288h1v1h-1zM236 289h1v1h-1zM236 290h1v1h-1zM236 291h1v1h-1zM236 292h1v1h-1zM236 293h1v1h-1zM236 294h1v1h-1zM236 295h1v1h-1zM236 296h1v1h-1zM236 297h1v1h-1zM236 298h1v1h-1zM236 299h1v1h-1zM236 300h1v1h-1zM236 301h1v1h-1zM236 302h1v1h-1zM236 303h1v1h-1zM236 304h1v1h-1zM236 305h1v1h-1zM236 306h1v1h-1zM236 307h1v1h-1zM236 308h1v1h-1zM236 309h1v1h-1zM236 310h1v1h-1zM236 311h1v1h-1zM236 312h1v1h-1zM236 313h1v1h-1zM236 314h1v1h-1zM236 315h1v1h-1zM236 316h1v1h-1z"/>
<path fill="#00f000" d="M21 654v10h1v-10zM22 654v9h1v-9zM23 656v7h1v-7zM24 654v9h1v-9zM25 657v7h1v-7zM26 656v9h1v-9zM27 658v7h1v-7zM28 659v7h1v-7zM29 660v7h1v-7zM30 660v7h1v-7zM31 659v7h1v-7zM32 657v9h1v-9zM33 656v9h1v-9zM34 658v7h1v-7zM35 657v7h1v-7zM36 657v7h1v-7zM37 656v10h1v-10zM38 656v7h1v-7zM39 653v12h1v-12zM40 655v4h1v-4zM41 652v9h1v-9zM42 654v4h1v-4zM43 651v9h1v-9zM44 648v9h1v-9zM45 652v9h1v-9zM46 652v9h1v-9zM47 652v12h1v-12zM48 654v10h1v-10zM49 653v6h1v-6zM50 655v7h1v-7zM51 653v12h1v-12zM52 653v9h1v-9zM53 654v8h1v-8zM54 654v9h1v-9zM55 656v7h1v-7zM56 656v7h1v-7zM57 656v7h1v-7zM58 656v7h1v-7zM59 656v7h1v-7zM60 656v7h1v-7zM61 656v7h1v-7zM62 656v7h1v-7zM63 656v10h1v-10zM64 656v7h1v-7zM65 654v9h1v-9zM66 656v7h1v-7zM67 656v7h1v-7zM68 656v7h1v-7zM69 656v10h1v-10zM70 656v7h1v-7zM71 654v9h1v-9zM72 654v9h1v-9zM73 656v7h1v-7zM74 654v9h1v-9zM75 654v9h1v-9zM76 656v7h1v-7zM77 656v7h1v-7zM78 656v7h1v-7zM79 654v9h1v-9zM80 651v12h1v-12zM81 654v9h1v-9zM82 656v7h1v-7zM83 656v7h1v-7zM84 656v7h1v-7zM85 656v7h1v-7zM86 656v7h1v-7zM87 656v7h1v-7zM88 654v9h1v-9zM89 656v7h1v-7zM90 656v7h1v-7zM91 654v9h1v-9zM92 654v9h1v-9zM93 656v7h1v-7zM94 656v7h1v-7zM95 656v4h1v-4zM96 656v7h1v-7zM97 654v9h1v-9zM98 656v7h1v-7zM99 654v9h1v-9zM100 656v7h1v-7zM101 656v7h1v-7zM102 656v7h1v-7zM103 656v10h1v-10zM104 656v7h1v-7zM105 654v9h1v-9zM106 656v7h1v-7zM107 654v6h1v-6zM108 656v7h1v-7zM109 656v10h1v-10zM110 654v12h1v-12zM111 654v9h1v-9zM112 656v4h1v-4zM113 656v7h1v-7zM114 656v7h1v-7zM115 654v9h1v-9zM116 656v7h1v-7zM117 656v10h1v-10zM118 654v6h1v-6zM119 656v7h1v-7zM120 656v7h1v-7zM121 656v7h1v-7zM122 656v7h1v-7zM123 654v9h1v-9zM124 656v7h1v-7zM125 656v7h1v-7zM126 654v9h1v-9zM127 656v7h1v-7zM128 656v7h1v-7zM129 656v10h1v-10zM130 656v7h1v-7zM131 654v9h1v-9zM132 656v7h1v-7zM133 656v7h1v-7zM134 656v7h1v-7zM135 656v7h1v-7zM136 656v7h1v-7zM137 656v7h1v-7zM138 656v7h1v-7zM139 656v7h1v-7zM140 654v9h1v-9zM141 656v7h1v-7zM142 654v9h1v-9zM143 654v9h1v-9zM144 654v12h1v-12zM145 654v9h1v-9zM146 656v7h1v-7zM147 654v9h1v-9zM148 654v9h1v-9zM149 654v9h1v-9zM150 654v9h1v-9zM151 654v9h1v-9zM152 654v9h1v-9zM153 656v7h1v-7zM154 654v6h1v-6zM155 656v7h1v-7zM156 656v10h1v-10zM157 654v9h1v-9zM158 656v7h1v-7zM159 654v9h1v-9zM160 656v7h1v-7zM161 656v7h1v-7zM162 654v6h1v-6zM163 654v9h1v-9zM164 656v7h1v-7zM165 656v7h1v-7zM166 656v7h1v-7zM167 656v7h1v-7zM168 654v9h1v-9zM169 656v7h1v-7zM170 656v7h1v-7zM171 656v7h1v-7zM172 654v9h1v-9zM173 656v7h1v-7zM174 656v4h1v-4zM175 654v9h1v-9zM176 656v7h1v-7zM177 656v7h1v-7zM178 656v10h1v-10zM179 656v7h1v-7zM180 656v7h1v-7zM181 656v7h1v-7zM182 654v9h1v-9zM183 654v12h1v-12zM184 656v10h1v-10zM185 654v9h1v-9zM186 656v4h1v-4zM187 656v7h1v-7zM188 654v9h1v-9zM189 654v9h1v-9zM190 656v7h1v-7zM191 656v10h1v-10zM192 654v9h1v-9zM193 654v12h1v-12zM194 654v9h1v-9zM195 654v9h1v-9zM196 656v7h1v-7zM197 656v7h1v-7zM198 656v7h1v-7zM199 656v4h1v-4zM200 654v9h1v-9zM201 654v9h1v-9zM202 656v7h1v-7zM203 654v9h1v-9zM204 656v10h1v-10zM205 654v9h1v-9zM206 654v6h1v-6zM207 656v7h1v-7zM208 651v15h1v-15zM209 656v7h1v-7zM210 656v7h1v-7zM211 654v9h1v-9zM212 656v7h1v-7zM213 656v7h1v-7zM214 654v9h1v-9zM215 656v7h1v-7zM216 656v7h1v-7zM217 654v9h1v-9zM218 656v7h1v-7zM219 656v7h1v-7zM220 654v12h1v-12zM221 656v7h1v-7zM222 656v7h1v-7zM223 656v7h1v-7zM224 654v9h1v-9zM225 656v7h1v-7zM226 654v9h1v-9zM227 656v7h1v-7zM228 656v7h1v-7zM229 656v7h1v-7zM230 656v7h1v-7zM231 633v33h1v-33zM232 482v184h1v-184zM233 480v100h1v-100zM233 634v29h1v-29zM234 562v53h1v-53zM234 656v10h1v-10zM235 545v55h1v-55zM235 656v7h1v-7zM236 593v41h1v-41zM236 656v7h1v-7zM237 602v40h1v-40zM237 654v9h1v-9zM238 617v32h1v-32zM238 654v9h1v-9zM239 622v31h1v-31zM239 656v7h1v-7zM240 617v12h1v-12zM240 640v15h1v-15zM240 656v7h1v-7zM241 619v34h1v-34zM241 656v7h1v-7zM242 643v20h1v-20zM243 649v14h1v-14zM244 656v7h1v-7zM245 638v17h1v-17zM245 656v7h1v-7zM246 630v21h1v-21zM246 654v9h1v-9zM247 638v15h1v-15zM247 656v7h1v-7zM248 653v10h1v-10zM249 654v9h1v-9zM250 654v9h1v-9zM251 656v7h1v-7zM252 656v7h1v-7zM253 638v26h1v-26zM254 645v19h1v-19zM255 648v15h1v-15zM256 651v16h1v-16zM257 656v7h1v-7zM258 654v9h1v-9zM259 656v7h1v-7zM260 654v9h1v-9zM261 654v9h1v-9zM262 654v9h1v-9zM263 656v7h1v-7zM264 656v7h1v-7zM265 654v9h1v-9zM266 656v7h1v-7zM267 656v7h1v-7zM268 656v7h1v-7zM269 654v9h1v-9zM270 656v7h1v-7zM271 656v7h1v-7zM272 656v7h1v-7zM273 656v7h1v-7zM274 656v7h1v-7zM275 654v9h1v-9zM276 656v7h1v-7zM277 656v7h1v-7zM278 656v7h1v-7zM279 656v10h1v-10zM280 654v9h1v-9zM281 654v9h1v-9zM282 656v7h1v-7zM283 654v9h1v-9zM284 646v17h1v-17zM285 656v7h1v-7zM286 656v7h1v-7zM287 656v7h1v-7zM288 646v18h1v-18zM289 610v40h1v-40zM289 654v9h1v-9zM290 612v54h1v-54zM291 650v13h1v-13zM292 649v14h1v-14zM293 654v9h1v-9zM294 654v9h1v-9zM295 656v7h1v-7zM296 654v9h1v-9zM297 640v15h1v-15zM297 656v7h1v-7zM298 636v27h1v-27zM299 643v20h1v-20zM300 636v18h1v-18zM300 656v4h1v-4zM301 636v27h1v-27zM302 656v7h1v-7zM303 616v47h1v-47zM304 610v40h1v-40zM304 654v9h1v-9zM305 636v27h1v-27zM306 656v7h1v-7zM307 654v9h1v-9zM308 656v7h1v-7zM309 656v7h1v-7zM310 656v7h1v-7zM311 654v9h1v-9zM312 656v7h1v-7zM313 656v7h1v-7zM314 654v9h1v-9zM315 654v9h1v-9zM316 656v7h1v-7zM317 656v7h1v-7zM318 656v7h1v-7zM319 656v10h1v-10zM320 654v12h1v-12zM321 656v7h1v-7zM322 656v7h1v-7zM323 656v4h1v-4zM324 656v10h1v-10zM325 656v7h1v-7zM326 656v10h1v-10zM327 628v35h1v-35zM328 656v7h1v-7zM329 656v7h1v-7zM330 656v7h1v-7zM331 656v7h1v-7zM332 654v9h1v-9zM333 656v7h1v-7zM334 656v7h1v-7zM335 656v10h1v-10zM336 654v9h1v-9zM337 656v7h1v-7zM338 654v9h1v-9zM339 656v7h1v-7zM340 656v7h1v-7zM341 654v9h1v-9zM342 654v9h1v-9zM343 656v7h1v-7zM344 654v9h1v-9zM345 654v9h1v-9zM346 630v33h1v-33zM347 640v23h1v-23zM348 656v7h1v-7zM349 656v7h1v-7zM350 656v7h1v-7zM351 656v7h1v-7zM352 656v7h1v-7zM353 649v14h1v-14zM354 656v7h1v-7zM355 656v7h1v-7zM356 656v7h1v-7zM357 654v9h1v-9zM358 654v12h1v-12zM359 656v7h1v-7zM360 654v9h1v-9zM361 656v7h1v-7zM362 656v4h1v-4zM363 656v7h1v-7zM364 656v7h1v-7zM365 656v7h1v-7zM366 656v7h1v-7zM367 654v12h1v-12zM368 656v7h1v-7zM369 656v7h1v-7zM370 654v12h1v-12zM371 654v9h1v-9zM372 654v9h1v-9zM373 656v7h1v-7zM374 656v4h1v-4zM375 656v7h1v-7zM376 654v9h1v-9zM377 656v7h1v-7zM378 654v9h1v-9zM379 656v7h1v-7zM380 656v7h1v-7zM381 656v7h1v-7zM382 654v9h1v-9zM383 656v7h1v-7zM384 656v4h1v-4zM385 656v7h1v-7zM386 654v9h1v-9zM387 656v4h1v-4zM388 656v4h1v-4zM389 656v7h1v-7zM390 656v7h1v-7zM391 656v4h1v-4zM392 656v7h1v-7zM393 615v48h1v-48zM394 625v38h1v-38zM395 636v27h1v-27zM396 656v4h1v-4zM397 656v7h1v-7zM398 654v12h1v-12zM399 654v9h1v-9zM400 656v7h1v-7zM401 656v10h1v-10zM402 654v6h1v-6zM403 656v7h1v-7zM404 654v9h1v-9zM405 656v7h1v-7zM406 654v9h1v-9zM407 654v9h1v-9zM408 656v7h1v-7zM409 656v10h1v-10zM410 656v7h1v-7zM411 656v7h1v-7zM412 656v7h1v-7zM413 656v7h1v-7zM414 656v7h1v-7zM415 656v7h1v-7zM416 654v9h1v-9zM417 656v7h1v-7zM418 656v7h1v-7zM419 656v7h1v-7zM420 656v10h1v-10zM421 654v12h1v-12zM422 656v4h1v-4zM423 656v7h1v-7zM424 656v7h1v-7zM425 654v9h1v-9zM426 656v7h1v-7zM427 656v7h1v-7zM428 654v9h1v-9zM429 656v7h1v-7zM430 654v9h1v-9zM431 656v7h1v-7zM432 654v9h1v-9zM433 656v7h1v-7zM434 656v7h1v-7zM435 656v7h1v-7zM436 656v7h1v-7zM437 656v7h1v-7zM438 656v10h1v-10zM439 656v10h1v-10zM440 654v9h1v-9zM441 656v7h1v-7zM442 656v7h1v-7zM443 656v7h1v-7zM444 654v9h1v-9zM445 656v7h1v-7zM446 656v7h1v-7zM447 656v7h1v-7zM448 656v7h1v-7zM449 656v7h1v-7zM450 656v4h1v-4zM451 656v7h1v-7zM452 654v9h1v-9zM453 656v7h1v-7zM454 656v7h1v-7zM455 656v10h1v-10zM456 654v9h1v-9zM457 656v7h1v-7zM458 656v7h1v-7zM459 656v7h1v-7zM460 651v12h1v-12zM461 654v9h1v-9zM462 656v7h1v-7zM463 656v7h1v-7zM464 656v7h1v-7zM465 654v9h1v-9zM466 656v7h1v-7zM467 656v7h1v-7zM468 656v7h1v-7zM469 654v9h1v-9zM470 654v9h1v-9zM471 656v10h1v-10zM472 656v7h1v-7zM473 650v13h1v-13zM474 656v10h1v-10zM475 654v9h1v-9zM476 656v7h1v-7zM477 654v9h1v-9zM478 656v10h1v-10zM479 654v9h1v-9zM480 654v9h1v-9zM481 656v7h1v-7zM482 654v9h1v-9zM483 656v7h1v-7zM484 654v6h1v-6zM485 654v9h1v-9zM486 656v7h1v-7zM487 655v7h1v-7zM488 655v7h1v-7zM489 655v7h1v-7zM490 655v7h1v-7zM491 652v9h1v-9zM492 654v7h1v-7zM493 654v7h1v-7zM494 651v9h1v-9zM495 653v7h1v-7zM496 653v7h1v-7zM497 653v10h1v-10zM498 652v7h1v-7zM499 652v7h1v-7zM500 653v7h1v-7zM501 653v7h1v-7zM502 654v7h1v-7zM503 655v7h1v-7zM504 653v9h1v-9zM505 656v7h1v-7zM506 638v14h1v-14zM506 656v10h1v-10zM507 645v7h1v-7zM507 655v9h1v-9zM508 656v9h1v-9zM509 658v7h1v-7zM510 659v7h1v-7zM511 657v9h1v-9zM512 656v9h1v-9zM513 658v7h1v-7zM514 657v7h1v-7zM515 657v10h1v-10zM516 656v10h1v-10zM517 654v9h1v-9zM518 656v7h1v-7zM519 655v7h1v-7zM520 653v9h1v-9zM521 652v9h1v-9zM522 652v9h1v-9zM523 653v7h1v-7zM524 653v7h1v-7zM525 654v10h1v-10zM526 654v10h1v-10zM527 655v7h1v-7zM528 655v7h1v-7zM529 654v9h1v-9zM530 656v7h1v-7zM531 657v7h1v-7zM532 657v7h1v-7zM533 658v7h1v-7zM534 656v9h1v-9zM535 659v7h1v-7zM536 659v9h1v-9zM537 660v7h1v-7zM538 660v6h1v-6zM539 659v7h1v-7zM540 658v8h1v-8zM541 658v7h1v-7zM542 656v8h1v-8zM543 657v7h1v-7zM544 656v4h1v-4zM545 656v7h1v-7zM546 656v10h1v-10zM547 656v7h1v-7zM548 656v10h1v-10zM549 654v9h1v-9zM550 656v7h1v-7zM551 656v7h1v-7zM552 656v7h1v-7zM553 656v10h1v-10zM554 654v9h1v-9zM555 654v12h1v-12zM556 656v10h1v-10zM557 654v9h1v-9zM558 656v7h1v-7zM559 654v9h1v-9zM560 656v7h1v-7zM561 656v7h1v-7zM562 654v12h1v-12zM563 656v7h1v-7zM564 654v9h1v-9zM565 656v7h1v-7zM566 656v7h1v-7zM567 656v7h1v-7zM568 656v7h1v-7zM569 654v9h1v-9zM570 654v9h1v-9zM571 656v7h1v-7zM572 656v7h1v-7zM573 656v7h1v-7zM574 654v12h1v-12zM575 656v7h1v-7zM576 654v9h1v-9zM577 656v7h1v-7zM578 656v7h1v-7zM579 656v7h1v-7zM580 656v7h1v-7zM581 656v7h1v-7zM582 656v7h1v-7zM583 656v7h1v-7zM584 656v7h1v-7zM585 656v7h1v-7zM586 656v7h1v-7zM587 656v10h1v-10zM588 656v7h1v-7zM589 654v9h1v-9zM590 656v7h1v-7zM591 656v7h1v-7zM592 654v9h1v-9zM593 651v12h1v-12zM594 654v9h1v-9zM595 654v9h1v-9zM596 656v7h1v-7zM597 656v7h1v-7zM598 656v7h1v-7zM599 656v7h1v-7zM600 656v7h1v-7zM601 654v9h1v-9zM602 656v7h1v-7zM603 641v19h1v-19zM604 648v15h1v-15zM605 654v9h1v-9zM606 656v7h1v-7zM607 654v9h1v-9zM608 656v7h1v-7zM609 656v7h1v-7zM610 654v9h1v-9zM611 656v7h1v-7zM612 654v9h1v-9zM613 656v7h1v-7zM614 656v7h1v-7zM615 656v7h1v-7zM616 656v10h1v-10zM617 654v12h1v-12zM618 654v9h1v-9zM619 654v6h1v-6zM620 654v12h1v-12zM621 656v7h1v-7zM622 656v7h1v-7zM623 656v7h1v-7zM624 656v7h1v-7zM625 656v7h1v-7zM626 656v4h1v-4zM627 656v7h1v-7zM628 654v9h1v-9zM629 654v9h1v-9zM630 656v7h1v-7zM631 656v7h1v-7zM632 656v10h1v-10zM633 656v7h1v-7zM634 654v9h1v-9zM635 656v7h1v-7zM636 656v7h1v-7zM637 654v9h1v-9zM638 656v7h1v-7zM639 656v7h1v-7zM640 656v7h1v-7zM641 654v9h1v-9zM642 656v7h1v-7zM643 656v7h1v-7zM644 654v12h1v-12zM645 654v9h1v-9zM646 654v9h1v-9zM647 623v40h1v-40zM648 638v25h1v-25zM649 654v9h1v-9zM650 654v9h1v-9zM651 656v10h1v-10zM652 656v7h1v-7zM653 656v10h1v-10zM654 656v7h1v-7zM655 656v7h1v-7zM656 656v10h1v-10zM657 656v7h1v-7zM658 656v7h1v-7zM659 656v7h1v-7zM660 656v7h1v-7zM661 654v9h1v-9zM662 656v7h1v-7zM663 654v9h1v-9zM664 654v9h1v-9zM665 656v7h1v-7zM666 654v9h1v-9zM667 654v9h1v-9zM668 654v9h1v-9zM669 656v7h1v-7zM670 656v4h1v-4zM671 654v9h1v-9zM672 654v12h1v-12zM673 656v7h1v-7zM674 656v7h1v-7zM675 656v7h1v-7zM676 654v12h1v-12zM677 656v7h1v-7zM678 656v7h1v-7zM679 656v7h1v-7zM680 636v30h1v-30zM681 636v27h1v-27zM682 656v7h1v-7zM683 656v10h1v-10zM684 656v7h1v-7zM685 656v7h1v-7zM686 656v7h1v-7zM687 654v9h1v-9zM688 656v7h1v-7zM689 656v7h1v-7zM690 654v12h1v-12zM691 656v7h1v-7zM692 656v7h1v-7zM693 656v7h1v-7zM694 656v7h1v-7zM695 654v9h1v-9zM696 656v7h1v-7zM697 656v7h1v-7zM698 656v7h1v-7zM699 656v7h1v-7zM700 654v9h1v-9zM701 656v4h1v-4zM702 656v7h1v-7zM703 656v7h1v-7zM704 656v7h1v-7zM705 656v7h1v-7zM706 654v9h1v-9zM707 656v7h1v-7zM708 651v12h1v-12zM709 654v9h1v-9zM710 654v9h1v-9zM711 654v9h1v-9zM712 654v9h1v-9zM713 656v10h1v-10zM714 656v7h1v-7zM715 656v7h1v-7zM716 654v9h1v-9zM717 656v7h1v-7zM718 656v7h1v-7zM719 656v7h1v-7zM720 656v7h1v-7zM721 656v7h1v-7zM722 638v25h1v-25zM723 650v16h1v-16zM724 656v7h1v-7zM725 654v9h1v-9zM726 654v9h1v-9zM727 654v9h1v-9zM728 654v9h1v-9zM729 656v7h1v-7zM730 654v9h1v-9zM731 656v7h1v-7zM732 656v7h1v-7zM733 654v12h1v-12zM734 654v9h1v-9zM735 656v7h1v-7zM736 654v9h1v-9zM737 656v7h1v-7zM738 656v7h1v-7zM739 654v12h1v-12zM740 654v9h1v-9zM741 654v9h1v-9zM742 656v7h1v-7zM743 656v7h1v-7zM744 656v7h1v-7zM745 654v6h1v-6zM746 656v7h1v-7zM747 655v10h1v-10zM748 653v12h1v-12zM749 652v9h1v-9zM750 654v7h1v-7zM751 652v12h1v-12zM752 653v10h1v-10zM753 653v7h1v-7zM754 652v7h1v-7zM755 652v7h1v-7zM756 653v7h1v-7zM757 651v9h1v-9zM758 654v7h1v-7zM759 655v7h1v-7zM760 656v7h1v-7zM761 654v9h1v-9zM762 657v7h1v-7zM763 656v9h1v-9zM764 659v7h1v-7zM765 659v7h1v-7zM766 660v7h1v-7zM767 658v9h1v-9zM768 657v9h1v-9zM769 659v7h1v-7zM770 656v9h1v-9zM771 656v9h1v-9zM772 657v7h1v-7zM773 657v7h1v-7zM774 656v7h1v-7zM775 656v7h1v-7zM776 653v6h1v-6zM777 653v9h1v-9zM778 654v7h1v-7zM779 654v7h1v-7zM780 651v12h1v-12zM781 653v7h1v-7zM782 652v9h1v-9zM783 654v7h1v-7zM784 655v7h1v-7zM785 656v7h1v-7zM786 654v10h1v-10zM787 655v9h1v-9zM788 656v9h1v-9zM789 659v7h1v-7zM790 657v11h1v-11zM791 660v7h1v-7zM792 658v10h1v-10zM793 659v9h1v-9zM794 656v12h1v-12zM795 653v12h1v-12zM796 658v6h1v-6zM797 655v9h1v-9zM798 656v10h1v-10zM799 656v7h1v-7zM800 656v6h1v-6zM801 655v7h1v-7zM802 652v10h1v-10zM803 654v4h1v-4zM804 654v6h1v-6zM805 653v7h1v-7zM806 653v7h1v-7zM807 654v7h1v-7zM808 654v7h1v-7zM809 654v8h1v-8zM810 653v9h1v-9zM811 655v7h1v-7zM812 654v9h1v-9zM813 656v7h1v-7zM814 656v7h1v-7zM815 656v7h1v-7zM816 654v9h1v-9zM817 654v9h1v-9zM818 656v7h1v-7zM819 656v10h1v-10zM820 656v7h1v-7zM821 656v10h1v-10zM822 656v7h1v-7zM823 656v7h1v-7zM824 656v7h1v-7zM825 656v7h1v-7zM826 654v6h1v-6zM827 656v7h1v-7zM828 654v9h1v-9zM829 656v7h1v-7zM830 656v7h1v-7zM831 656v7h1v-7zM832 656v10h1v-10zM833 654v9h1v-9zM834 656v7h1v-7zM835 656v7h1v-7zM836 654v9h1v-9zM837 656v7h1v-7zM838 654v9h1v-9zM839 654v9h1v-9zM840 656v7h1v-7zM841 654v9h1v-9zM842 654v9h1v-9zM843 656v7h1v-7zM844 656v10h1v-10zM845 656v7h1v-7zM846 654v9h1v-9zM847 656v7h1v-7zM848 654v9h1v-9zM849 656v7h1v-7zM850 654v9h1v-9zM851 633v30h1v-30zM852 650v13h1v-13zM853 654v9h1v-9zM854 656v7h1v-7zM855 656v7h1v-7zM856 656v7h1v-7zM857 656v7h1v-7zM858 656v7h1v-7zM859 654v9h1v-9zM860 654v12h1v-12zM861 654v6h1v-6zM862 656v7h1v-7zM863 656v7h1v-7zM864 654v9h1v-9zM865 656v7h1v-7zM866 656v7h1v-7zM867 654v9h1v-9zM868 656v7h1v-7zM869 654v9h1v-9zM870 654v9h1v-9zM871 656v7h1v-7zM872 656v7h1v-7zM873 656v7h1v-7zM874 654v6h1v-6zM875 654v9h1v-9zM876 633v30h1v-30zM877 648v15h1v-15zM878 656v7h1v-7zM879 656v4h1v-4zM880 656v4h1v-4zM881 656v7h1v-7zM882 654v9h1v-9zM883 654v9h1v-9zM884 654v9h1v-9zM885 656v7h1v-7zM886 656v7h1v-7zM887 656v4h1v-4zM888 656v7h1v-7zM889 651v12h1v-12zM890 656v7h1v-7zM891 656v7h1v-7zM892 654v9h1v-9zM893 654v9h1v-9zM894 654v9h1v-9zM895 654v9h1v-9zM896 656v7h1v-7zM897 656v7h1v-7zM898 656v7h1v-7zM899 654v9h1v-9zM900 654v9h1v-9zM901 654v9h1v-9zM902 656v7h1v-7zM903 654v9h1v-9zM904 654v9h1v-9zM905 654v9h1v-9zM906 656v7h1v-7zM907 654v9h1v-9zM908 654v9h1v-9zM909 656v7h1v-7zM910 656v7h1v-7zM911 656v7h1v-7zM912 656v4h1v-4zM913 656v7h1v-7zM914 654v9h1v-9zM915 654v9h1v-9zM916 656v7h1v-7zM917 656v7h1v-7zM918 656v10h1v-10zM919 656v7h1v-7zM920 656v7h1v-7zM921 656v7h1v-7zM922 656v7h1v-7zM923 656v7h1v-7zM924 656v7h1v-7zM925 656v7h1v-7zM926 654v9h1v-9zM927 654v9h1v-9zM928 654v12h1v-12zM929 656v7h1v-7zM930 656v7h1v-7zM931 656v7h1v-7zM932 654v9h1v-9zM933 656v7h1v-7zM934 654v9h1v-9zM935 654v12h1v-12zM936 656v7h1v-7zM937 656v7h1v-7zM938 656v7h1v-7zM939 654v9h1v-9zM940 654v9h1v-9zM941 654v9h1v-9zM942 656v7h1v-7zM943 656v7h1v-7zM944 654v9h1v-9zM945 656v7h1v-7zM946 654v12h1v-12zM947 654v9h1v-9zM948 656v7h1v-7zM949 654v9h1v-9zM950 656v7h1v-7zM951 656v7h1v-7zM952 656v7h1v-7zM953 656v7h1v-7zM954 656v7h1v-7zM955 656v10h1v-10zM956 656v7h1v-7zM957 654v9h1v-9zM958 656v10h1v-10zM959 656v7h1v-7zM960 656v7h1v-7zM961 656v7h1v-7zM962 656v7h1v-7zM963 656v7h1v-7zM964 654v9h1v-9zM965 654v9h1v-9zM966 656v7h1v-7zM967 656v7h1v-7zM968 656v7h1v-7zM969 656v7h1v-7zM970 654v9h1v-9zM971 656v7h1v-7zM972 656v7h1v-7zM973 656v7h1v-7zM974 656v7h1v-7zM975 656v7h1v-7zM976 654v9h1v-9zM977 656v10h1v-10zM978 654v9h1v-9zM979 656v7h1v-7zM980 656v4h1v-4zM981 654v9h1v-9zM982 656v7h1v-7zM983 656v7h1v-7zM984 656v7h1v-7zM985 656v7h1v-7zM986 654v9h1v-9zM987 654v12h1v-12zM988 654v6h1v-6zM989 654v9h1v-9zM990 656v7h1v-7zM991 654v9h1v-9zM992 654v9h1v-9zM993 656v7h1v-7zM994 656v7h1v-7zM995 656v7h1v-7zM996 654v9h1v-9zM997 656v7h1v-7zM998 656v7h1v-7zM999 656v7h1v-7zM1000 653v9h1v-9zM1001 655v7h1v-7zM1002 654v10h1v-10zM1003 654v7h1v-7zM1004 653v7h1v-7zM1005 651v9h1v-9zM1006 650v9h1v-9zM1007 652v7h1v-7zM1008 649v9h1v-9zM1009 649v9h1v-9zM1010 650v9h1v-9zM1011 653v10h1v-10zM1012 654v6h1v-6zM1013 654v7h1v-7zM1014 655v7h1v-7zM1015 656v7h1v-7zM1016 655v12h1v-12zM1017 658v7h1v-7zM1018 657v9h1v-9zM1019 658v9h1v-9zM1020 661v7h1v-7z"/>
<path fill="#ececec" d="M21 30v1h1v-1zM21 43v1h1v-1zM21 56v1h1v-1zM21 69v1h1v-1zM21 95v1h1v-1zM21 108v1h1v-1zM21 121v1h1v-1zM21 134v1h1v-1zM21 160v1h1v-1zM21 173v1h1v-1zM21 186v1h1v-1zM21 199v1h1v-1zM21 225v1h1v-1zM21 238v1h1v-1zM21 251v1h1v-1zM21 264v1h1v-1zM21 290v1h1v-1zM21 303v1h1v-1zM21 316v1h1v-1zM21 329v1h1v-1zM21 336v1h1v-1zM21 338v1h1v-1zM21 340v1h1v-1zM21 344v1h1v-1zM21 346v1h1v-1zM21 348v1h1v-1zM21 355v1h1v-1zM21 368v1h1v-1zM21 381v1h1v-1zM21 394v1h1v-1zM21 420v1h1v-1zM21 433v1h1v-1zM21 446v1h1v-1zM21 459v1h1v-1zM21 485v1h1v-1zM21 498v1h1v-1zM21 511v1h1v-1zM21 524v1h1v-1zM21 550v1h1v-1zM21 563v1h1v-1zM21 576v1h1v-1zM21 589v1h1v-1zM21 615v1h1v-1zM21 628v1h1v-1zM21 641v1h1v-1zM21 654v1h1v-1zM22 82v1h1v-1zM22 147v1h1v-1zM22 212v1h1v-1zM22 277v1h1v-1zM22 342v1h1v-1zM22 407v1h1v-1zM22 472v1h1v-1zM22 537v1h1v-1zM22 602v1h1v-1zM23 30v1h1v-1zM23 43v1h1v-1zM23 56v1h1v-1zM23 69v1h1v-1zM23 95v1h1v-1zM23 108v1h1v-1zM23 121v1h1v-1zM23 134v1h1v-1zM23 160v1h1v-1zM23 173v1h1v-1zM23 186v1h1v-1zM23 199v1h1v-1zM23 225v1h1v-1zM23 238v1h1v-1zM23 251v1h1v-1zM23 264v1h1v-1zM23 290v1h1v-1zM23 303v1h1v-1zM23 316v1h1v-1zM23 329v1h1v-1zM23 342v1h1v-1zM23 355v1h1v-1zM23 368v1h1v-1zM23 381v1h1v-1zM23 394v1h1v-1zM23 420v1h1v-1zM23 433v1h1v-1zM23 446v1h1v-1zM23 459v1h1v-1zM23 485v1h1v-1zM23 498v1h1v-1zM23 511v1h1v-1zM23 524v1h1v-1zM23 550v1h1v-1zM23 563v1h1v-1zM23 576v1h1v-1zM23 589v1h1v-1zM23 615v1h1v-1zM23 628v1h1v-1zM23 641v1h1v-1zM23 654v1h1v-1zM24 82v1h1v-1zM24 147v1h1v-1zM24 212v1h1v-1zM24 277v1h1v-1zM24 342v1h1v-1zM24 407v1h1v-1zM24 472v1h1v-1zM24 537v1h1v-1zM24 602v1h1v-1zM25 342v1h1v-1zM26 82v1h1v-1zM26 147v1h1v-1zM26 212v1h1v-1zM26 277v1h1v-1zM26 342v1h1v-1zM26 407v1h1v-1zM26 472v1h1v-1zM26 537v1h1v-1zM26 602v1h1v-1zM27 342v1h1v-1zM29 342v1h1v-1zM31 342v1h1v-1zM33 342v1h1v-1zM35 342v1h1v-1zM37 342v1h1v-1zM39 342v1h1v-1zM41 17v1h1v-1zM41 19v1h1v-1zM41 82v1h1v-1zM41 147v1h1v-1zM41 212v1h1v-1zM41 277v1h1v-1zM41 339v1h1v-1zM41 341v3h1v-3zM41 345v1h1v-1zM41 407v1h1v-1zM41 472v1h1v-1zM41 537v1h1v-1zM41 602v1h1v-1zM41 665v1h1v-1zM41 667v1h1v-1zM43 342v1h1v-1zM45 342v1h1v-1zM47 342v1h1v-1zM49 342v1h1v-1zM51 342v1h1v-1zM53 342v1h1v-1zM55 342v1h1v-1zM57 342v1h1v-1zM59 342v1h1v-1zM61 17v1h1v-1zM61 19v1h1v-1zM61 82v1h1v-1zM61 147v1h1v-1zM61 212v1h1v-1zM61 277v1h1v-1zM61 339v1h1v-1zM61 341v3h1v-3zM61 345v1h1v-1zM61 407v1h1v-1zM61 472v1h1v-1zM61 537v1h1v-1zM61 602v1h1v-1zM61 665v1h1v-1zM61 667v1h1v-1zM63 342v1h1v-1zM65 342v1h1v-1zM67 342v1h1v-1zM69 342v1h1v-1zM71 342v1h1v-1zM73 342v1h1v-1zM75 342v1h1v-1zM77 342v1h1v-1zM79 342v1h1v-1zM81 17v1h1v-1zM81 19v1h1v-1zM81 82v1h1v-1zM81 147v1h1v-1zM81 212v1h1v-1zM81 277v1h1v-1zM81 339v1h1v-1zM81 341v3h1v-3zM81 345v1h1v-1zM81 407v1h1v-1zM81 472v1h1v-1zM81 537v1h1v-1zM81 602v1h1v-1zM81 665v1h1v-1zM81 667v1h1v-1zM83 342v1h1v-1zM85 342v1h1v-1zM87 342v1h1v-1zM89 342v1h1v-1zM91 342v1h1v-1zM93 342v1h1v-1zM95 342v1h1v-1zM97 342v1h1v-1zM99 342v1h1v-1zM101 17v1h1v-1zM101 19v1h1v-1zM101 82v1h1v-1zM101 147v1h1v-1zM101 212v1h1v-1zM101 277v1h1v-1zM101 339v1h1v-1zM101 341v3h1v-3zM101 345v1h1v-1zM101 407v1h1v-1zM101 472v1h1v-1zM101 537v1h1v-1zM101 602v1h1v-1zM101 665v1h1v-1zM101 667v1h1v-1zM103 342v1h1v-1zM105 342v1h1v-1zM107 342v1h1v-1zM109 342v1h1v-1zM111 342v1h1v-1zM113 342v1h1v-1zM115 342v1h1v-1zM117 342v1h1v-1zM119 342v1h1v-1zM121 18v1h1v-1zM121 20v1h1v-1zM121 22v1h1v-1zM121 30v1h1v-1zM121 43v1h1v-1zM121 56v1h1v-1zM121 69v1h1v-1zM121 82v1h1v-1zM121 95v1h1v-1zM121 108v1h1v-1zM121 121v1h1v-1zM121 134v1h1v-1zM121 147v1h1v-1zM121 160v1h1v-1zM121 173v1h1v-1zM121 186v1h1v-1zM121 199v1h1v-1zM121 212v1h1v-1zM121 225v1h1v-1zM121 238v1h1v-1zM121 251v1h1v-1zM121 264v1h1v-1zM121 277v1h1v-1zM121 290v1h1v-1zM121 303v1h1v-1zM121 316v1h1v-1zM121 329v1h1v-1zM121 336v1h1v-1zM121 338v9h1v-9zM121 348v1h1v-1zM121 355v1h1v-1zM121 368v1h1v-1zM121 381v1h1v-1zM121 394v1h1v-1zM121 407v1h1v-1zM121 420v1h1v-1zM121 433v1h1v-1zM121 446v1h1v-1zM121 459v1h1v-1zM121 472v1h1v-1zM121 485v1h1v-1zM121 498v1h1v-1zM121 511v1h1v-1zM121 524v1h1v-1zM121 537v1h1v-1zM121 550v1h1v-1zM121 563v1h1v-1zM121 576v1h1v-1zM121 589v1h1v-1zM121 602v1h1v-1zM121 615v1h1v-1zM121 628v1h1v-1zM121 641v1h1v-1zM121 654v1h1v-1zM121 662v1h1v-1zM121 664v1h1v-1zM121 666v1h1v-1zM123 342v1h1v-1zM125 342v1h1v-1zM127 342v1h1v-1zM129 342v1h1v-1zM131 342v1h1v-1zM133 342v1h1v-1zM135 342v1h1v-1zM137 342v1h1v-1zM139 342v1h1v-1zM141 17v1h1v-1zM141 19v1h1v-1zM141 82v1h1v-1zM141 147v1h1v-1zM141 212v1h1v-1zM141 277v1h1v-1zM141 339v1h1v-1zM141 341v3h1v-3zM141 345v1h1v-1zM141 407v1h1v-1zM141 472v1h1v-1zM141 537v1h1v-1zM141 602v1h1v-1zM141 665v1h1v-1zM141 667v1h1v-1zM143 342v1h1v-1zM145 342v1h1v-1zM147 342v1h1v-1zM149 342v1h1v-1zM151 342v1h1v-1zM153 342v1h1v-1zM155 342v1h1v-1zM157 342v1h1v-1zM159 342v1h1v-1zM161 17v1h1v-1zM161 19v1h1v-1zM161 82v1h1v-1zM161 147v1h1v-1zM161 212v1h1v-1zM161 277v1h1v-1zM161 339v1h1v-1zM161 341v3h1v-3zM161 345v1h1v-1zM161 407v1h1v-1zM161 472v1h1v-1zM161 537v1h1v-1zM161 602v1h1v-1zM161 665v1h1v-1zM161 667v1h1v-1zM163 342v1h1v-1zM165 342v1h1v-1zM167 342v1h1v-1zM169 342v1h1v-1zM171 342v1h1v-1zM173 342v1h1v-1zM175 342v1h1v-1zM177 342v1h1v-1zM179 342v1h1v-1zM181 17v1h1v-1zM181 19v1h1v-1zM181 82v1h1v-1zM181 147v1h1v-1zM181 212v1h1v-1zM181 277v1h1v-1zM181 339v1h1v-1zM181 341v3h1v-3zM181 345v1h1v-1zM181 407v1h1v-1zM181 472v1h1v-1zM181 537v1h1v-1zM181 602v1h1v-1zM181 665v1h1v-1zM181 667v1h1v-1zM183 342v1h1v-1zM185 342v1h1v-1zM187 342v1h1v-1zM189 342v1h1v-1zM191 342v1h1v-1zM193 342v1h1v-1zM195 342v1h1v-1zM197 342v1h1v-1zM199 342v1h1v-1zM201 17v1h1v-1zM201 19v1h1v-1zM201 82v1h1v-1zM201 147v1h1v-1zM201 212v1h1v-1zM201 277v1h1v-1zM201 339v1h1v-1zM201 341v3h1v-3zM201 345v1h1v-1zM201 407v1h1v-1zM201 472v1h1v-1zM201 537v1h1v-1zM201 602v1h1v-1zM201 665v1h1v-1zM201 667v1h1v-1zM203 342v1h1v-1zM205 342v1h1v-1zM207 342v1h1v-1zM209 342v1h1v-1zM211 342v1h1v-1zM213 342v1h1v-1zM215 342v1h1v-1zM217 342v1h1v-1zM219 342v1h1v-1zM221 18v1h1v-1zM221 20v1h1v-1zM221 22v1h1v-1zM221 30v1h1v-1zM221 43v1h1v-1zM221 56v1h1v-1zM221 69v1h1v-1zM221 82v1h1v-1zM221 95v1h1v-1zM221 108v1h1v-1zM221 121v1h1v-1zM221 134v1h1v-1zM221 147v1h1v-1zM221 160v1h1v-1zM221 173v1h1v-1zM221 186v1h1v-1zM221 199v1h1v-1zM221 212v1h1v-1zM221 225v1h1v-1zM221 238v1h1v-1zM221 251v1h1v-1zM221 264v1h1v-1zM221 277v1h1v-1zM221 290v1h1v-1zM221 303v1h1v-1zM221 316v1h1v-1zM221 329v1h1v-1zM221 336v1h1v-1zM221 338v9h1v-9zM221 348v1h1v-1zM221 355v1h1v-1zM221 368v1h1v-1zM221 381v1h1v-1zM221 394v1h1v-1zM221 407v1h1v-1zM221 420v1h1v-1zM221 433v1h1v-1zM221 446v1h1v-1zM221 459v1h1v-1zM221 472v1h1v-1zM221 485v1h1v-1zM221 498v1h1v-1zM221 511v1h1v-1zM221 524v1h1v-1zM221 537v1h1v-1zM221 550v1h1v-1zM221 563v1h1v-1zM221 576v1h1v-1zM221 589v1h1v-1zM221 602v1h1v-1zM221 615v1h1v-1zM221 628v1h1v-1zM221 641v1h1v-1zM221 654v1h1v-1zM221 662v1h1v-1zM221 664v1h1v-1zM221 666v1h1v-1zM223 342v1h1v-1zM225 342v1h1v-1zM227 342v1h1v-1zM229 342v1h1v-1zM231 342v1h1v-1zM233 342v1h1v-1zM235 342v1h1v-1zM237 342v1h1v-1zM239 342v1h1v-1zM241 17v1h1v-1zM241 19v1h1v-1zM241 82v1h1v-1zM241 147v1h1v-1zM241 212v1h1v-1zM241 277v1h1v-1zM241 339v1h1v-1zM241 341v3h1v-3zM241 345v1h1v-1zM241 407v1h1v-1zM241 472v1h1v-1zM241 537v1h1v-1zM241 602v1h1v-1zM241 665v1h1v-1zM241 667v1h1v-1zM243 342v1h1v-1zM245 342v1h1v-1zM247 342v1h1v-1zM249 342v1h1v-1zM251 342v1h1v-1zM253 342v1h1v-1zM255 342v1h1v-1zM257 342v1h1v-1zM259 342v1h1v-1zM261 17v1h1v-1zM261 19v1h1v-1zM261 82v1h1v-1zM261 147v1h1v-1zM261 212v1h1v-1zM261 277v1h1v-1zM261 339v1h1v-1zM261 341v3h1v-3zM261 345v1h1v-1zM261 407v1h1v-1zM261 472v1h1v-1zM261 537v1h1v-1zM261 602v1h1v-1zM261 665v1h1v-1zM261 667v1h1v-1zM263 342v1h1v-1zM265 342v1h1v-1zM267 342v1h1v-1zM269 342v1h1v-1zM271 342v1h1v-1zM273 342v1h1v-1zM275 342v1h1v-1zM277 342v1h1v-1zM279 342v1h1v-1zM281 17v1h1v-1zM281 19v1h1v-1zM281 82v1h1v-1zM281 147v1h1v-1zM281 212v1h1v-1zM281 277v1h1v-1zM281 339v1h1v-1zM281 341v3h1v-3zM281 345v1h1v-1zM281 407v1h1v-1zM281 472v1h1v-1zM281 537v1h1v-1zM281 602v1h1v-1zM281 665v1h1v-1zM281 667v1h1v-1zM283 342v1h1v-1zM285 342v1h1v-1zM287 342v1h1v-1zM289 342v1h1v-1zM291 342v1h1v-1zM293 342v1h1v-1zM295 342v1h1v-1zM297 342v1h1v-1zM299 342v1h1v-1zM301 17v1h1v-1zM301 19v1h1v-1zM301 82v1h1v-1zM301 147v1h1v-1zM301 212v1h1v-1zM301 277v1h1v-1zM301 339v1h1v-1zM301 341v3h1v-3zM301 345v1h1v-1zM301 407v1h1v-1zM301 472v1h1v-1zM301 537v1h1v-1zM301 602v1h1v-1zM301 665v1h1v-1zM301 667v1h1v-1zM303 342v1h1v-1zM305 342v1h1v-1zM307 342v1h1v-1zM309 342v1h1v-1zM311 342v1h1v-1zM313 342v1h1v-1zM315 342v1h1v-1zM317 342v1h1v-1zM319 342v1h1v-1zM321 18v1h1v-1zM321 20v1h1v-1zM321 22v1h1v-1zM321 30v1h1v-1zM321 43v1h1v-1zM321 56v1h1v-1zM321 69v1h1v-1zM321 82v1h1v-1zM321 95v1h1v-1zM321 108v1h1v-1zM321 121v1h1v-1zM321 134v1h1v-1zM321 147v1h1v-1zM321 160v1h1v-1zM321 173v1h1v-1zM321 186v1h1v-1zM321 199v1h1v-1zM321 212v1h1v-1zM321 225v1h1v-1zM321 238v1h1v-1zM321 251v1h1v-1zM321 264v1h1v-1zM321 277v1h1v-1zM321 290v1h1v-1zM321 303v1h1v-1zM321 316v1h1v-1zM321 329v1h1v-1zM321 336v1h1v-1zM321 338v9h1v-9zM321 348v1h1v-1zM321 355v1h1v-1zM321 368v1h1v-1zM321 381v1h1v-1zM321 394v1h1v-1zM321 407v1h1v-1zM321 420v1h1v-1zM321 433v1h1v-1zM321 446v1h1v-1zM321 459v1h1v-1zM321 472v1h1v-1zM321 485v1h1v-1zM321 498v1h1v-1zM321 511v1h1v-1zM321 524v1h1v-1zM321 537v1h1v-1zM321 550v1h1v-1zM321 563v1h1v-1zM321 576v1h1v-1zM321 589v1h1v-1zM321 602v1h1v-1zM321 615v1h1v-1zM321 628v1h1v-1zM321 641v1h1v-1zM321 654v1h1v-1zM321 662v1h1v-1zM321 664v1h1v-1zM321 666v1h1v-1zM323 342v1h1v-1zM325 342v1h1v-1zM327 342v1h1v-1zM329 342v1h1v-1zM331 342v1h1v-1zM333 342v1h1v-1zM335 342v1h1v-1zM337 342v1h1v-1zM339 342v1h1v-1zM341 17v1h1v-1zM341 19v1h1v-1zM341 82v1h1v-1zM341 147v1h1v-1zM341 212v1h1v-1zM341 277v1h1v-1zM341 339v1h1v-1zM341 341v3h1v-3zM341 345v1h1v-1zM341 407v1h1v-1zM341 472v1h1v-1zM341 537v1h1v-1zM341 602v1h1v-1zM341 665v1h1v-1zM341 667v1h1v-1zM343 342v1h1v-1zM345 342v1h1v-1zM347 342v1h1v-1zM349 342v1h1v-1zM351 342v1h1v-1zM353 342v1h1v-1zM355 342v1h1v-1zM357 342v1h1v-1zM359 342v1h1v-1zM361 17v1h1v-1zM361 19v1h1v-1zM361 82v1h1v-1zM361 147v1h1v-1zM361 212v1h1v-1zM361 277v1h1v-1zM361 339v1h1v-1zM361 341v3h1v-3zM361 345v1h1v-1zM361 407v1h1v-1zM361 472v1h1v-1zM361 537v1h1v-1zM361 602v1h1v-1zM361 665v1h1v-1zM361 667v1h1v-1zM363 342v1h1v-1zM365 342v1h1v-1zM367 342v1h1v-1zM369 342v1h1v-1zM371 342v1h1v-1zM373 342v1h1v-1zM375 342v1h1v-1zM377 342v1h1v-1zM379 342v1h1v-1zM381 17v1h1v-1zM381 19v1h1v-1zM381 82v1h1v-1zM381 147v1h1v-1zM381 212v1h1v-1zM381 277v1h1v-1zM381 339v1h1v-1zM381 341v3h1v-3zM381 345v1h1v-1zM381 407v1h1v-1zM381 472v1h1v-1zM381 537v1h1v-1zM381 602v1h1v-1zM381 665v1h1v-1zM381 667v1h1v-1zM383 342v1h1v-1zM385 342v1h1v-1zM387 342v1h1v-1zM389 342v1h1v-1zM391 342v1h1v-1zM393 342v1h1v-1zM395 342v1h1v-1zM397 342v1h1v-1zM399 342v1h1v-1zM401 17v1h1v-1zM401 19v1h1v-1zM401 82v1h1v-1zM401 147v1h1v-1zM401 212v1h1v-1zM401 277v1h1v-1zM401 339v1h1v-1zM401 341v3h1v-3zM401 345v1h1v-1zM401 407v1h1v-1zM401 472v1h1v-1zM401 537v1h1v-1zM401 602v1h1v-1zM401 665v1h1v-1zM401 667v1h1v-1zM403 342v1h1v-1zM405 342v1h1v-1zM407 342v1h1v-1zM409 342v1h1v-1zM411 342v1h1v-1zM413 342v1h1v-1zM415 342v1h1v-1zM417 342v1h1v-1zM419 342v1h1v-1zM421 18v1h1v-1zM421 20v1h1v-1zM421 22v1h1v-1zM421 30v1h1v-1zM421 43v1h1v-1zM421 56v1h1v-1zM421 69v1h1v-1zM421 82v1h1v-1zM421 95v1h1v-1zM421 108v1h1v-1zM421 121v1h1v-1zM421 134v1h1v-1zM421 147v1h1v-1zM421 160v1h1v-1zM421 173v1h1v-1zM421 186v1h1v-1zM421 199v1h1v-1zM421 212v1h1v-1zM421 225v1h1v-1zM421 238v1h1v-1zM421 251v1h1v-1zM421 264v1h1v-1zM421 277v1h1v-1zM421 290v1h1v-1zM421 303v1h1v-1zM421 316v1h1v-1zM421 329v1h1v-1zM421 336v1h1v-1zM421 338v9h1v-9zM421 348v1h1v-1zM421 355v1h1v-1zM421 368v1h1v-1zM421 381v1h1v-1zM421 394v1h1v-1zM421 407v1h1v-1zM421 420v1h1v-1zM421 433v1h1v-1zM421 446v1h1v-1zM421 459v1h1v-1zM421 472v1h1v-1zM421 485v1h1v-1zM421 498v1h1v-1zM421 511v1h1v-1zM421 524v1h1v-1zM421 537v1h1v-1zM421 550v1h1v-1zM421 563v1h1v-1zM421 576v1h1v-1zM421 589v1h1v-1zM421 602v1h1v-1zM421 615v1h1v-1zM421 628v1h1v-1zM421 641v1h1v-1zM421 654v1h1v-1zM421 662v1h1v-1zM421 664v1h1v-1zM421 666v1h1v-1zM423 342v1h1v-1zM425 342v1h1v-1zM427 342v1h1v-1zM429 342v1h1v-1zM431 342v1h1v-1zM433 342v1h1v-1zM435 342v1h1v-1zM437 342v1h1v-1zM439 342v1h1v-1zM441 17v1h1v-1zM441 19v1h1v-1zM441 82v1h1v-1zM441 147v1h1v-1zM441 212v1h1v-1zM441 277v1h1v-1zM441 339v1h1v-1zM441 341v3h1v-3zM441 345v1h1v-1zM441 407v1h1v-1zM441 472v1h1v-1zM441 537v1h1v-1zM441 602v1h1v-1zM441 665v1h1v-1zM441 667v1h1v-1zM443 342v1h1v-1zM445 342v1h1v-1zM447 342v1h1v-1zM449 342v1h1v-1zM451 342v1h1v-1zM453 342v1h1v-1zM455 342v1h1v-1zM457 342v1h1v-1zM459 342v1h1v-1zM461 17v1h1v-1zM461 19v1h1v-1zM461 82v1h1v-1zM461 147v1h1v-1zM461 212v1h1v-1zM461 277v1h1v-1zM461 339v1h1v-1zM461 341v3h1v-3zM461 345v1h1v-1zM461 407v1h1v-1zM461 472v1h1v-1zM461 537v1h1v-1zM461 602v1h1v-1zM461 665v1h1v-1zM461 667v1h1v-1zM463 342v1h1v-1zM465 342v1h1v-1zM467 342v1h1v-1zM469 342v1h1v-1zM471 342v1h1v-1zM473 342v1h1v-1zM475 342v1h1v-1zM477 342v1h1v-1zM479 342v1h1v-1zM481 17v1h1v-1zM481 19v1h1v-1zM481 82v1h1v-1zM481 147v1h1v-1zM481 212v1h1v-1zM481 277v1h1v-1zM481 339v1h1v-1zM481 341v3h1v-3zM481 345v1h1v-1zM481 407v1h1v-1zM481 472v1h1v-1zM481 537v1h1v-1zM481 602v1h1v-1zM481 665v1h1v-1zM481 667v1h1v-1zM483 342v1h1v-1zM485 342v1h1v-1zM487 342v1h1v-1zM489 342v1h1v-1zM491 342v1h1v-1zM493 342v1h1v-1zM495 342v1h1v-1zM497 342v1h1v-1zM499 342v1h1v-1zM501 17v1h1v-1zM501 19v1h1v-1zM501 82v1h1v-1zM501 147v1h1v-1zM501 212v1h1v-1zM501 277v1h1v-1zM501 339v1h1v-1zM501 341v3h1v-3zM501 345v1h1v-1zM501 407v1h1v-1zM501 472v1h1v-1zM501 537v1h1v-1zM501 602v1h1v-1zM501 665v1h1v-1zM501 667v1h1v-1zM503 342v1h1v-1zM505 342v1h1v-1zM507 342v1h1v-1zM509 342v1h1v-1zM511 342v1h1v-1zM513 342v1h1v-1zM515 82v1h1v-1zM515 147v1h1v-1zM515 212v1h1v-1zM515 277v1h1v-1zM515 342v1h1v-1zM515 407v1h1v-1zM515 472v1h1v-1zM515 537v1h1v-1zM515 602v1h1v-1zM517 82v1h1v-1zM517 147v1h1v-1zM517 212v1h1v-1zM517 277v1h1v-1zM517 342v1h1v-1zM517 407v1h1v-1zM517 472v1h1v-1zM517 537v1h1v-1zM517 602v1h1v-1zM518 30v1h1v-1zM518 43v1h1v-1zM518 56v1h1v-1zM518 69v1h1v-1zM518 82v1h1v-1zM518 95v1h1v-1zM518 108v1h1v-1zM518 121v1h1v-1zM518 134v1h1v-1zM518 147v1h1v-1zM518 160v1h1v-1zM518 173v1h1v-1zM518 186v1h1v-1zM518 199v1h1v-1zM518 212v1h1v-1zM518 225v1h1v-1zM518 238v1h1v-1zM518 251v1h1v-1zM518 264v1h1v-1zM518 277v1h1v-1zM518 290v1h1v-1zM518 303v1h1v-1zM518 316v1h1v-1zM518 329v1h1v-1zM518 355v1h1v-1zM518 368v1h1v-1zM518 381v1h1v-1zM518 394v1h1v-1zM518 407v1h1v-1zM518 420v1h1v-1zM518 433v1h1v-1zM518 446v1h1v-1zM518 459v1h1v-1zM518 472v1h1v-1zM518 485v1h1v-1zM518 498v1h1v-1zM518 511v1h1v-1zM518 524v1h1v-1zM518 537v1h1v-1zM518 550v1h1v-1zM518 563v1h1v-1zM518 576v1h1v-1zM518 589v1h1v-1zM518 602v1h1v-1zM518 615v1h1v-1zM518 628v1h1v-1zM518 641v1h1v-1zM518 654v1h1v-1zM519 82v1h1v-1zM519 147v1h1v-1zM519 212v1h1v-1zM519 277v1h1v-1zM519 342v1h1v-1zM519 407v1h1v-1zM519 472v1h1v-1zM519 537v1h1v-1zM519 602v1h1v-1zM520 30v1h1v-1zM520 43v1h1v-1zM520 56v1h1v-1zM520 69v1h1v-1zM520 82v1h1v-1zM520 95v1h1v-1zM520 108v1h1v-1zM520 121v1h1v-1zM520 134v1h1v-1zM520 147v1h1v-1zM520 160v1h1v-1zM520 173v1h1v-1zM520 186v1h1v-1zM520 199v1h1v-1zM520 212v1h1v-1zM520 225v1h1v-1zM520 238v1h1v-1zM520 251v1h1v-1zM520 264v1h1v-1zM520 277v1h1v-1zM520 290v1h1v-1zM520 303v1h1v-1zM520 316v1h1v-1zM520 329v1h1v-1zM520 355v1h1v-1zM520 368v1h1v-1zM520 381v1h1v-1zM520 394v1h1v-1zM520 407v1h1v-1zM520 420v1h1v-1zM520 433v1h1v-1zM520 446v1h1v-1zM520 459v1h1v-1zM520 472v1h1v-1zM520 485v1h1v-1zM520 498v1h1v-1zM520 511v1h1v-1zM520 524v1h1v-1zM520 537v1h1v-1zM520 550v1h1v-1zM520 563v1h1v-1zM520 576v1h1v-1zM520 589v1h1v-1zM520 602v1h1v-1zM520 615v1h1v-1zM520 628v1h1v-1zM520 641v1h1v-1zM520 654v1h1v-1zM521 18v1h1v-1zM521 20v1h1v-1zM521 22v1h1v-1zM521 24v1h1v-1zM521 26v1h1v-1zM521 28v1h1v-1zM521 30v1h1v-1zM521 32v1h1v-1zM521 34v1h1v-1zM521 36v1h1v-1zM521 38v1h1v-1zM521 40v1h1v-1zM521 42v3h1v-3zM521 46v1h1v-1zM521 48v1h1v-1zM521 50v1h1v-1zM521 52v1h1v-1zM521 54v1h1v-1zM521 56v1h1v-1zM521 58v1h1v-1zM521 60v1h1v-1zM521 62v1h1v-1zM521 64v1h1v-1zM521 66v1h1v-1zM521 68v3h1v-3zM521 72v1h1v-1zM521 74v1h1v-1zM521 76v1h1v-1zM521 78v1h1v-1zM521 80v1h1v-1zM521 82v1h1v-1zM521 84v1h1v-1zM521 86v1h1v-1zM521 88v1h1v-1zM521 90v1h1v-1zM521 92v1h1v-1zM521 94v3h1v-3zM521 98v1h1v-1zM521 100v1h1v-1zM521 102v1h1v-1zM521 104v1h1v-1zM521 106v1h1v-1zM521 108v1h1v-1zM521 110v1h1v-1zM521 112v1h1v-1zM521 114v1h1v-1zM521 116v1h1v-1zM521 118v1h1v-1zM521 120v3h1v-3zM521 124v1h1v-1zM521 126v1h1v-1zM521 128v1h1v-1zM521 130v1h1v-1zM521 132v1h1v-1zM521 134v1h1v-1zM521 136v1h1v-1zM521 138v1h1v-1zM521 140v1h1v-1zM521 142v1h1v-1zM521 144v1h1v-1zM521 146v3h1v-3zM521 150v1h1v-1zM521 152v1h1v-1zM521 154v1h1v-1zM521 156v1h1v-1zM521 158v1h1v-1zM521 160v1h1v-1zM521 162v1h1v-1zM521 164v1h1v-1zM521 166v1h1v-1zM521 168v1h1v-1zM521 170v1h1v-1zM521 172v3h1v-3zM521 176v1h1v-1zM521 178v1h1v-1zM521 180v1h1v-1zM521 182v1h1v-1zM521 184v1h1v-1zM521 186v1h1v-1zM521 188v1h1v-1zM521 190v1h1v-1zM521 192v1h1v-1zM521 194v1h1v-1zM521 196v1h1v-1zM521 198v3h1v-3zM521 202v1h1v-1zM521 204v1h1v-1zM521 206v1h1v-1zM521 208v1h1v-1zM521 210v1h1v-1zM521 212v1h1v-1zM521 214v1h1v-1zM521 216v1h1v-1zM521 218v1h1v-1zM521 220v1h1v-1zM521 222v1h1v-1zM521 224v3h1v-3zM521 228v1h1v-1zM521 230v1h1v-1zM521 232v1h1v-1zM521 234v1h1v-1zM521 236v1h1v-1zM521 238v1h1v-1zM521 240v1h1v-1zM521 242v1h1v-1zM521 244v1h1v-1zM521 246v1h1v-1zM521 248v1h1v-1zM521 250v3h1v-3zM521 254v1h1v-1zM521 256v1h1v-1zM521 258v1h1v-1zM521 260v1h1v-1zM521 262v1h1v-1zM521 264v1h1v-1zM521 266v1h1v-1zM521 268v1h1v-1zM521 270v1h1v-1zM521 272v1h1v-1zM521 274v1h1v-1zM521 276v3h1v-3zM521 280v1h1v-1zM521 282v1h1v-1zM521 284v1h1v-1zM521 286v1h1v-1zM521 288v1h1v-1zM521 290v1h1v-1zM521 292v1h1v-1zM521 294v1h1v-1zM521 296v1h1v-1zM521 298v1h1v-1zM521 300v1h1v-1zM521 302v3h1v-3zM521 306v1h1v-1zM521 308v1h1v-1zM521 310v1h1v-1zM521 312v1h1v-1zM521 314v1h1v-1zM521 316v1h1v-1zM521 318v1h1v-1zM521 320v1h1v-1zM521 322v1h1v-1zM521 324v1h1v-1zM521 326v1h1v-1zM521 328v3h1v-3zM521 332v1h1v-1zM521 334v1h1v-1zM521 336v1h1v-1zM521 338v1h1v-1zM521 340v1h1v-1zM521 342v1h1v-1zM521 344v1h1v-1zM521 346v1h1v-1zM521 348v1h1v-1zM521 350v1h1v-1zM521 352v1h1v-1zM521 354v3h1v-3zM521 358v1h1v-1zM521 360v1h1v-1zM521 362v1h1v-1zM521 364v1h1v-1zM521 366v1h1v-1zM521 368v1h1v-1zM521 370v1h1v-1zM521 372v1h1v-1zM521 374v1h1v-1zM521 376v1h1v-1zM521 378v1h1v-1zM521 380v3h1v-3zM521 384v1h1v-1zM521 386v1h1v-1zM521 388v1h1v-1zM521 390v1h1v-1zM521 392v1h1v-1zM521 394v1h1v-1zM521 396v1h1v-1zM521 398v1h1v-1zM521 400v1h1v-1zM521 402v1h1v-1zM521 404v1h1v-1zM521 406v3h1v-3zM521 410v1h1v-1zM521 412v1h1v-1zM521 414v1h1v-1zM521 416v1h1v-1zM521 418v1h1v-1zM521 420v1h1v-1zM521 422v1h1v-1zM521 424v1h1v-1zM521 426v1h1v-1zM521 428v1h1v-1zM521 430v1h1v-1zM521 432v3h1v-3zM521 436v1h1v-1zM521 438v1h1v-1zM521 440v1h1v-1zM521 442v1h1v-1zM521 444v1h1v-1zM521 446v1h1v-1zM521 448v1h1v-1zM521 450v1h1v-1zM521 452v1h1v-1zM521 454v1h1v-1zM521 456v1h1v-1zM521 458v3h1v-3zM521 462v1h1v-1zM521 464v1h1v-1zM521 466v1h1v-1zM521 468v1h1v-1zM521 470v1h1v-1zM521 472v1h1v-1zM521 474v1h1v-1zM521 476v1h1v-1zM521 478v1h1v-1zM521 480v1h1v-1zM521 482v1h1v-1zM521 484v3h1v-3zM521 488v1h1v-1zM521 490v1h1v-1zM521 492v1h1v-1zM521 494v1h1v-1zM521 496v1h1v-1zM521 498v1h1v-1zM521 500v1h1v-1zM521 502v1h1v-1zM521 504v1h1v-1zM521 506v1h1v-1zM521 508v1h1v-1zM521 510v3h1v-3zM521 514v1h1v-1zM521 516v1h1v-1zM521 518v1h1v-1zM521 520v1h1v-1zM521 522v1h1v-1zM521 524v1h1v-1zM521 526v1h1v-1zM521 528v1h1v-1zM521 530v1h1v-1zM521 532v1h1v-1zM521 534v1h1v-1zM521 536v3h1v-3zM521 540v1h1v-1zM521 542v1h1v-1zM521 544v1h1v-1zM521 546v1h1v-1zM521 548v1h1v-1zM521 550v1h1v-1zM521 552v1h1v-1zM521 554v1h1v-1zM521 556v1h1v-1zM521 558v1h1v-1zM521 560v1h1v-1zM521 562v3h1v-3zM521 566v1h1v-1zM521 568v1h1v-1zM521 570v1h1v-1zM521 572v1h1v-1zM521 574v1h1v-1zM521 576v1h1v-1zM521 578v1h1v-1zM521 580v1h1v-1zM521 582v1h1v-1zM521 584v1h1v-1zM521 586v1h1v-1zM521 588v3h1v-3zM521 592v1h1v-1zM521 594v1h1v-1zM521 596v1h1v-1zM521 598v1h1v-1zM521 600v1h1v-1zM521 602v1h1v-1zM521 604v1h1v-1zM521 606v1h1v-1zM521 608v1h1v-1zM521 610v1h1v-1zM521 612v1h1v-1zM521 614v3h1v-3zM521 618v1h1v-1zM521 620v1h1v-1zM521 622v1h1v-1zM521 624v1h1v-1zM521 626v1h1v-1zM521 628v1h1v-1zM521 630v1h1v-1zM521 632v1h1v-1zM521 634v1h1v-1zM521 636v1h1v-1zM521 638v1h1v-1zM521 640v3h1v-3zM521 644v1h1v-1zM521 646v1h1v-1zM521 648v1h1v-1zM521 650v1h1v-1zM521 652v1h1v-1zM521 654v1h1v-1zM521 656v1h1v-1zM521 658v1h1v-1zM521 660v1h1v-1zM521 662v1h1v-1zM521 664v1h1v-1zM521 666v1h1v-1zM522 30v1h1v-1zM522 43v1h1v-1zM522 56v1h1v-1zM522 69v1h1v-1zM522 82v1h1v-1zM522 95v1h1v-1zM522 108v1h1v-1zM522 121v1h1v-1zM522 134v1h1v-1zM522 147v1h1v-1zM522 160v1h1v-1zM522 173v1h1v-1zM522 186v1h1v-1zM522 199v1h1v-1zM522 212v1h1v-1zM522 225v1h1v-1zM522 238v1h1v-1zM522 251v1h1v-1zM522 264v1h1v-1zM522 277v1h1v-1zM522 290v1h1v-1zM522 303v1h1v-1zM522 316v1h1v-1zM522 329v1h1v-1zM522 355v1h1v-1zM522 368v1h1v-1zM522 381v1h1v-1zM522 394v1h1v-1zM522 407v1h1v-1zM522 420v1h1v-1zM522 433v1h1v-1zM522 446v1h1v-1zM522 459v1h1v-1zM522 472v1h1v-1zM522 485v1h1v-1zM522 498v1h1v-1zM522 511v1h1v-1zM522 524v1h1v-1zM522 537v1h1v-1zM522 550v1h1v-1zM522 563v1h1v-1zM522 576v1h1v-1zM522 589v1h1v-1zM522 602v1h1v-1zM522 615v1h1v-1zM522 628v1h1v-1zM522 641v1h1v-1zM522 654v1h1v-1zM523 82v1h1v-1zM523 147v1h1v-1zM523 212v1h1v-1zM523 277v1h1v-1zM523 342v1h1v-1zM523 407v1h1v-1zM523 472v1h1v-1zM523 537v1h1v-1zM523 602v1h1v-1zM524 30v1h1v-1zM524 43v1h1v-1zM524 56v1h1v-1zM524 69v1h1v-1zM524 82v1h1v-1zM524 95v1h1v-1zM524 108v1h1v-1zM524 121v1h1v-1zM524 134v1h1v-1zM524 147v1h1v-1zM524 160v1h1v-1zM524 173v1h1v-1zM524 186v1h1v-1zM524 199v1h1v-1zM524 212v1h1v-1zM524 225v1h1v-1zM524 238v1h1v-1zM524 251v1h1v-1zM524 264v1h1v-1zM524 277v1h1v-1zM524 290v1h1v-1zM524 303v1h1v-1zM524 316v1h1v-1zM524 329v1h1v-1zM524 355v1h1v-1zM524 368v1h1v-1zM524 381v1h1v-1zM524 394v1h1v-1zM524 407v1h1v-1zM524 420v1h1v-1zM524 433v1h1v-1zM524 446v1h1v-1zM524 459v1h1v-1zM524 472v1h1v-1zM524 485v1h1v-1zM524 498v1h1v-1zM524 511v1h1v-1zM524 524v1h1v-1zM524 537v1h1v-1zM524 550v1h1v-1zM524 563v1h1v-1zM524 576v1h1v-1zM524 589v1h1v-1zM524 602v1h1v-1zM524 615v1h1v-1zM524 628v1h1v-1zM524 641v1h1v-1zM524 654v1h1v-1zM525 82v1h1v-1zM525 147v1h1v-1zM525 212v1h1v-1zM525 277v1h1v-1zM525 342v1h1v-1zM525 407v1h1v-1zM525 472v1h1v-1zM525 537v1h1v-1zM525 602v1h1v-1zM527 82v1h1v-1zM527 147v1h1v-1zM527 212v1h1v-1zM527 277v1h1v-1zM527 342v1h1v-1zM527 407v1h1v-1zM527 472v1h1v-1zM527 537v1h1v-1zM527 602v1h1v-1zM529 342v1h1v-1zM531 342v1h1v-1zM533 342v1h1v-1zM535 342v1h1v-1zM537 342v1h1v-1zM539 342v1h1v-1zM541 17v1h1v-1zM541 19v1h1v-1zM541 82v1h1v-1zM541 147v1h1v-1zM541 212v1h1v-1zM541 277v1h1v-1zM541 339v1h1v-1zM541 341v3h1v-3zM541 345v1h1v-1zM541 407v1h1v-1zM541 472v1h1v-1zM541 537v1h1v-1zM541 602v1h1v-1zM541 665v1h1v-1zM541 667v1h1v-1zM543 342v1h1v-1zM545 342v1h1v-1zM547 342v1h1v-1zM549 342v1h1v-1zM551 342v1h1v-1zM553 342v1h1v-1zM555 342v1h1v-1zM557 342v1h1v-1zM559 342v1h1v-1zM561 17v1h1v-1zM561 19v1h1v-1zM561 82v1h1v-1zM561 147v1h1v-1zM561 212v1h1v-1zM561 277v1h1v-1zM561 339v1h1v-1zM561 341v3h1v-3zM561 345v1h1v-1zM561 407v1h1v-1zM561 472v1h1v-1zM561 537v1h1v-1zM561 602v1h1v-1zM561 665v1h1v-1zM561 667v1h1v-1zM563 342v1h1v-1zM565 342v1h1v-1zM567 342v1h1v-1zM569 342v1h1v-1zM571 342v1h1v-1zM573 342v1h1v-1zM575 342v1h1v-1zM577 342v1h1v-1zM579 342v1h1v-1zM581 17v1h1v-1zM581 19v1h1v-1zM581 82v1h1v-1zM581 147v1h1v-1zM581 212v1h1v-1zM581 277v1h1v-1zM581 339v1h1v-1zM581 341v3h1v-3zM581 345v1h1v-1zM581 407v1h1v-1zM581 472v1h1v-1zM581 537v1h1v-1zM581 602v1h1v-1zM581 665v1h1v-1zM581 667v1h1v-1zM583 342v1h1v-1zM585 342v1h1v-1zM587 342v1h1v-1zM589 342v1h1v-1zM591 342v1h1v-1zM593 342v1h1v-1zM595 342v1h1v-1zM597 342v1h1v-1zM599 342v1h1v-1zM601 17v1h1v-1zM601 19v1h1v-1zM601 82v1h1v-1zM601 147v1h1v-1zM601 212v1h1v-1zM601 277v1h1v-1zM601 339v1h1v-1zM601 341v3h1v-3zM601 345v1h1v-1zM601 407v1h1v-1zM601 472v1h1v-1zM601 537v1h1v-1zM601 602v1h1v-1zM601 665v1h1v-1zM601 667v1h1v-1zM603 342v1h1v-1zM605 342v1h1v-1zM607 342v1h1v-1zM609 342v1h1v-1zM611 342v1h1v-1zM613 342v1h1v-1zM615 342v1h1v-1zM617 342v1h1v-1zM619 342v1h1v-1zM621 18v1h1v-1zM621 20v1h1v-1zM621 22v1h1v-1zM621 30v1h1v-1zM621 43v1h1v-1zM621 56v1h1v-1zM621 69v1h1v-1zM621 82v1h1v-1zM621 95v1h1v-1zM621 108v1h1v-1zM621 121v1h1v-1zM621 134v1h1v-1zM621 147v1h1v-1zM621 160v1h1v-1zM621 173v1h1v-1zM621 186v1h1v-1zM621 199v1h1v-1zM621 212v1h1v-1zM621 225v1h1v-1zM621 238v1h1v-1zM621 251v1h1v-1zM621 264v1h1v-1zM621 277v1h1v-1zM621 290v1h1v-1zM621 303v1h1v-1zM621 316v1h1v-1zM621 329v1h1v-1zM621 336v1h1v-1zM621 338v9h1v-9zM621 348v1h1v-1zM621 355v1h1v-1zM621 368v1h1v-1zM621 381v1h1v-1zM621 394v1h1v-1zM621 407v1h1v-1zM621 420v1h1v-1zM621 433v1h1v-1zM621 446v1h1v-1zM621 459v1h1v-1zM621 472v1h1v-1zM621 485v1h1v-1zM621 498v1h1v-1zM621 511v1h1v-1zM621 524v1h1v-1zM621 537v1h1v-1zM621 550v1h1v-1zM621 563v1h1v-1zM621 576v1h1v-1zM621 589v1h1v-1zM621 602v1h1v-1zM621 615v1h1v-1zM621 628v1h1v-1zM621 641v1h1v-1zM621 654v1h1v-1zM621 662v1h1v-1zM621 664v1h1v-1zM621 666v1h1v-1zM623 342v1h1v-1zM625 342v1h1v-1zM627 342v1h1v-1zM629 342v1h1v-1zM631 342v1h1v-1zM633 342v1h1v-1zM635 342v1h1v-1zM637 342v1h1v-1zM639 342v1h1v-1zM641 17v1h1v-1zM641 19v1h1v-1zM641 82v1h1v-1zM641 147v1h1v-1zM641 212v1h1v-1zM641 277v1h1v-1zM641 339v1h1v-1zM641 341v3h1v-3zM641 345v1h1v-1zM641 407v1h1v-1zM641 472v1h1v-1zM641 537v1h1v-1zM641 602v1h1v-1zM641 665v1h1v-1zM641 667v1h1v-1zM643 342v1h1v-1zM645 342v1h1v-1zM647 342v1h1v-1zM649 342v1h1v-1zM651 342v1h1v-1zM653 342v1h1v-1zM655 342v1h1v-1zM657 342v1h1v-1zM659 342v1h1v-1zM661 17v1h1v-1zM661 19v1h1v-1zM661 82v1h1v-1zM661 147v1h1v-1zM661 212v1h1v-1zM661 277v1h1v-1zM661 339v1h1v-1zM661 341v3h1v-3zM661 345v1h1v-1zM661 407v1h1v-1zM661 472v1h1v-1zM661 537v1h1v-1zM661 602v1h1v-1zM661 665v1h1v-1zM661 667v1h1v-1zM663 342v1h1v-1zM665 342v1h1v-1zM667 342v1h1v-1zM669 342v1h1v-1zM671 342v1h1v-1zM673 342v1h1v-1zM675 342v1h1v-1zM677 342v1h1v-1zM679 342v1h1v-1zM681 17v1h1v-1zM681 19v1h1v-1zM681 82v1h1v-1zM681 147v1h1v-1zM681 212v1h1v-1zM681 277v1h1v-1zM681 339v1h1v-1zM681 341v3h1v-3zM681 345v1h1v-1zM681 407v1h1v-1zM681 472v1h1v-1zM681 537v1h1v-1zM681 602v1h1v-1zM681 665v1h1v-1zM681 667v1h1v-1zM683 342v1h1v-1zM685 342v1h1v-1zM687 342v1h1v-1zM689 342v1h1v-1zM691 342v1h1v-1zM693 342v1h1v-1zM695 342v1h1v-1zM697 342v1h1v-1zM699 342v1h1v-1zM701 17v1h1v-1zM701 19v1h1v-1zM701 82v1h1v-1zM701 147v1h1v-1zM701 212v1h1v-1zM701 277v1h1v-1zM701 339v1h1v-1zM701 341v3h1v-3zM701 345v1h1v-1zM701 407v1h1v-1zM701 472v1h1v-1zM701 537v1h1v-1zM701 602v1h1v-1zM701 665v1h1v-1zM701 667v1h1v-1zM703 342v1h1v-1zM705 342v1h1v-1zM707 342v1h1v-1zM709 342v1h1v-1zM711 342v1h1v-1zM713 342v1h1v-1zM715 342v1h1v-1zM717 342v1h1v-1zM719 342v1h1v-1zM721 18v1h1v-1zM721 20v1h1v-1zM721 22v1h1v-1zM721 30v1h1v-1zM721 43v1h1v-1zM721 56v1h1v-1zM721 69v1h1v-1zM721 82v1h1v-1zM721 95v1h1v-1zM721 108v1h1v-1zM721 121v1h1v-1zM721 134v1h1v-1zM721 147v1h1v-1zM721 160v1h1v-1zM721 173v1h1v-1zM721 186v1h1v-1zM721 199v1h1v-1zM721 212v1h1v-1zM721 225v1h1v-1zM721 238v1h1v-1zM721 251v1h1v-1zM721 264v1h1v-1zM721 277v1h1v-1zM721 290v1h1v-1zM721 303v1h1v-1zM721 316v1h1v-1zM721 329v1h1v-1zM721 336v1h1v-1zM721 338v9h1v-9zM721 348v1h1v-1zM721 355v1h1v-1zM721 368v1h1v-1zM721 381v1h1v-1zM721 394v1h1v-1zM721 407v1h1v-1zM721 420v1h1v-1zM721 433v1h1v-1zM721 446v1h1v-1zM721 459v1h1v-1zM721 472v1h1v-1zM721 485v1h1v-1zM721 498v1h1v-1zM721 511v1h1v-1zM721 524v1h1v-1zM721 537v1h1v-1zM721 550v1h1v-1zM721 563v1h1v-1zM721 576v1h1v-1zM721 589v1h1v-1zM721 602v1h1v-1zM721 615v1h1v-1zM721 628v1h1v-1zM721 641v1h1v-1zM721 654v1h1v-1zM721 662v1h1v-1zM721 664v1h1v-1zM721 666v1h1v-1zM723 342v1h1v-1zM725 342v1h1v-1zM727 342v1h1v-1zM729 342v1h1v-1zM731 342v1h1v-1zM733 342v1h1v-1zM735 342v1h1v-1zM737 342v1h1v-1zM739 342v1h1v-1zM741 17v1h1v-1zM741 19v1h1v-1zM741 82v1h1v-1zM741 147v1h1v-1zM741 212v1h1v-1zM741 277v1h1v-1zM741 339v1h1v-1zM741 341v3h1v-3zM741 345v1h1v-1zM741 407v1h1v-1zM741 472v1h1v-1zM741 537v1h1v-1zM741 602v1h1v-1zM741 665v1h1v-1zM741 667v1h1v-1zM743 342v1h1v-1zM745 342v1h1v-1zM747 342v1h1v-1zM749 342v1h1v-1zM751 342v1h1v-1zM753 342v1h1v-1zM755 342v1h1v-1zM757 342v1h1v-1zM759 342v1h1v-1zM761 17v1h1v-1zM761 19v1h1v-1zM761 82v1h1v-1zM761 147v1h1v-1zM761 212v1h1v-1zM761 277v1h1v-1zM761 339v1h1v-1zM761 341v3h1v-3zM761 345v1h1v-1zM761 407v1h1v-1zM761 472v1h1v-1zM761 537v1h1v-1zM761 602v1h1v-1zM761 665v1h1v-1zM761 667v1h1v-1zM763 342v1h1v-1zM765 342v1h1v-1zM767 342v1h1v-1zM769 342v1h1v-1zM771 342v1h1v-1zM773 342v1h1v-1zM775 342v1h1v-1zM777 342v1h1v-1zM779 342v1h1v-1zM781 17v1h1v-1zM781 19v1h1v-1zM781 82v1h1v-1zM781 147v1h1v-1zM781 212v1h1v-1zM781 277v1h1v-1zM781 339v1h1v-1zM781 341v3h1v-3zM781 345v1h1v-1zM781 407v1h1v-1zM781 472v1h1v-1zM781 537v1h1v-1zM781 602v1h1v-1zM781 665v1h1v-1zM781 667v1h1v-1zM783 342v1h1v-1zM785 342v1h1v-1zM787 342v1h1v-1zM789 342v1h1v-1zM791 342v1h1v-1zM793 342v1h1v-1zM795 342v1h1v-1zM797 342v1h1v-1zM799 342v1h1v-1zM801 17v1h1v-1zM801 19v1h1v-1zM801 82v1h1v-1zM801 147v1h1v-1zM801 212v1h1v-1zM801 277v1h1v-1zM801 339v1h1v-1zM801 341v3h1v-3zM801 345v1h1v-1zM801 407v1h1v-1zM801 472v1h1v-1zM801 537v1h1v-1zM801 602v1h1v-1zM801 665v1h1v-1zM801 667v1h1v-1zM803 342v1h1v-1zM805 342v1h1v-1zM807 342v1h1v-1zM809 342v1h1v-1zM811 342v1h1v-1zM813 342v1h1v-1zM815 342v1h1v-1zM817 342v1h1v-1zM819 342v1h1v-1zM821 18v1h1v-1zM821 20v1h1v-1zM821 22v1h1v-1zM821 30v1h1v-1zM821 43v1h1v-1zM821 56v1h1v-1zM821 69v1h1v-1zM821 82v1h1v-1zM821 95v1h1v-1zM821 108v1h1v-1zM821 121v1h1v-1zM821 134v1h1v-1zM821 147v1h1v-1zM821 160v1h1v-1zM821 173v1h1v-1zM821 186v1h1v-1zM821 199v1h1v-1zM821 212v1h1v-1zM821 225v1h1v-1zM821 238v1h1v-1zM821 251v1h1v-1zM821 264v1h1v-1zM821 277v1h1v-1zM821 290v1h1v-1zM821 303v1h1v-1zM821 316v1h1v-1zM821 329v1h1v-1zM821 336v1h1v-1zM821 338v9h1v-9zM821 348v1h1v-1zM821 355v1h1v-1zM821 368v1h1v-1zM821 381v1h1v-1zM821 394v1h1v-1zM821 407v1h1v-1zM821 420v1h1v-1zM821 433v1h1v-1zM821 446v1h1v-1zM821 459v1h1v-1zM821 472v1h1v-1zM821 485v1h1v-1zM821 498v1h1v-1zM821 511v1h1v-1zM821 524v1h1v-1zM821 537v1h1v-1zM821 550v1h1v-1zM821 563v1h1v-1zM821 576v1h1v-1zM821 589v1h1v-1zM821 602v1h1v-1zM821 615v1h1v-1zM821 628v1h1v-1zM821 641v1h1v-1zM821 654v1h1v-1zM821 662v1h1v-1zM821 664v1h1v-1zM821 666v1h1v-1zM823 342v1h1v-1zM825 342v1h1v-1zM827 342v1h1v-1zM829 342v1h1v-1zM831 342v1h1v-1zM833 342v1h1v-1zM835 342v1h1v-1zM837 342v1h1v-1zM839 342v1h1v-1zM841 17v1h1v-1zM841 19v1h1v-1zM841 82v1h1v-1zM841 147v1h1v-1zM841 212v1h1v-1zM841 277v1h1v-1zM841 339v1h1v-1zM841 341v3h1v-3zM841 345v1h1v-1zM841 407v1h1v-1zM841 472v1h1v-1zM841 537v1h1v-1zM841 602v1h1v-1zM841 665v1h1v-1zM841 667v1h1v-1zM843 342v1h1v-1zM845 342v1h1v-1zM847 342v1h1v-1zM849 342v1h1v-1zM851 342v1h1v-1zM853 342v1h1v-1zM855 342v1h1v-1zM857 342v1h1v-1zM859 342v1h1v-1zM861 17v1h1v-1zM861 19v1h1v-1zM861 82v1h1v-1zM861 147v1h1v-1zM861 212v1h1v-1zM861 277v1h1v-1zM861 339v1h1v-1zM861 341v3h1v-3zM861 345v1h1v-1zM861 407v1h1v-1zM861 472v1h1v-1zM861 537v1h1v-1zM861 602v1h1v-1zM861 665v1h1v-1zM861 667v1h1v-1zM863 342v1h1v-1zM865 342v1h1v-1zM867 342v1h1v-1zM869 342v1h1v-1zM871 342v1h1v-1zM873 342v1h1v-1zM875 342v1h1v-1zM877 342v1h1v-1zM879 342v1h1v-1zM881 17v1h1v-1zM881 19v1h1v-1zM881 82v1h1v-1zM881 147v1h1v-1zM881 212v1h1v-1zM881 277v1h1v-1zM881 339v1h1v-1zM881 341v3h1v-3zM881 345v1h1v-1zM881 407v1h1v-1zM881 472v1h1v-1zM881 537v1h1v-1zM881 602v1h1v-1zM881 665v1h1v-1zM881 667v1h1v-1zM883 342v1h1v-1zM885 342v1h1v-1zM887 342v1h1v-1zM889 342v1h1v-1zM891 342v1h1v-1zM893 342v1h1v-1zM895 342v1h1v-1zM897 342v1h1v-1zM899 342v1h1v-1zM901 17v1h1v-1zM901 19v1h1v-1zM901 82v1h1v-1zM901 147v1h1v-1zM901 212v1h1v-1zM901 277v1h1v-1zM901 339v1h1v-1zM901 341v3h1v-3zM901 345v1h1v-1zM901 407v1h1v-1zM901 472v1h1v-1zM901 537v1h1v-1zM901 602v1h1v-1zM901 665v1h1v-1zM901 667v1h1v-1zM903 342v1h1v-1zM905 342v1h1v-1zM907 342v1h1v-1zM909 342v1h1v-1zM911 342v1h1v-1zM913 342v1h1v-1zM915 342v1h1v-1zM917 342v1h1v-1zM919 342v1h1v-1zM921 18v1h1v-1zM921 20v1h1v-1zM921 22v1h1v-1zM921 30v1h1v-1zM921 43v1h1v-1zM921 56v1h1v-1zM921 69v1h1v-1zM921 82v1h1v-1zM921 95v1h1v-1zM921 108v1h1v-1zM921 121v1h1v-1zM921 134v1h1v-1zM921 147v1h1v-1zM921 160v1h1v-1zM921 173v1h1v-1zM921 186v1h1v-1zM921 199v1h1v-1zM921 212v1h1v-1zM921 225v1h1v-1zM921 238v1h1v-1zM921 251v1h1v-1zM921 264v1h1v-1zM921 277v1h1v-1zM921 290v1h1v-1zM921 303v1h1v-1zM921 316v1h1v-1zM921 329v1h1v-1zM921 336v1h1v-1zM921 338v9h1v-9zM921 348v1h1v-1zM921 355v1h1v-1zM921 368v1h1v-1zM921 381v1h1v-1zM921 394v1h1v-1zM921 407v1h1v-1zM921 420v1h1v-1zM921 433v1h1v-1zM921 446v1h1v-1zM921 459v1h1v-1zM921 472v1h1v-1zM921 485v1h1v-1zM921 498v1h1v-1zM921 511v1h1v-1zM921 524v1h1v-1zM921 537v1h1v-1zM921 550v1h1v-1zM921 563v1h1v-1zM921 576v1h1v-1zM921 589v1h1v-1zM921 602v1h1v-1zM921 615v1h1v-1zM921 628v1h1v-1zM921 641v1h1v-1zM921 654v1h1v-1zM921 662v1h1v-1zM921 664v1h1v-1zM921 666v1h1v-1zM923 342v1h1v-1zM925 342v1h1v-1zM927 342v1h1v-1zM929 342v1h1v-1zM931 342v1h1v-1zM933 342v1h1v-1zM935 342v1h1v-1zM937 342v1h1v-1zM939 342v1h1v-1zM941 17v1h1v-1zM941 19v1h1v-1zM941 82v1h1v-1zM941 147v1h1v-1zM941 212v1h1v-1zM941 277v1h1v-1zM941 339v1h1v-1zM941 341v3h1v-3zM941 345v1h1v-1zM941 407v1h1v-1zM941 472v1h1v-1zM941 537v1h1v-1zM941 602v1h1v-1zM941 665v1h1v-1zM941 667v1h1v-1zM943 342v1h1v-1zM945 342v1h1v-1zM947 342v1h1v-1zM949 342v1h1v-1zM951 342v1h1v-1zM953 342v1h1v-1zM955 342v1h1v-1zM957 342v1h1v-1zM959 342v1h1v-1zM961 17v1h1v-1zM961 19v1h1v-1zM961 82v1h1v-1zM961 147v1h1v-1zM961 212v1h1v-1zM961 277v1h1v-1zM961 339v1h1v-1zM961 341v3h1v-3zM961 345v1h1v-1zM961 407v1h1v-1zM961 472v1h1v-1zM961 537v1h1v-1zM961 602v1h1v-1zM961 665v1h1v-1zM961 667v1h1v-1zM963 342v1h1v-1zM965 342v1h1v-1zM967 342v1h1v-1zM969 342v1h1v-1zM971 342v1h1v-1zM973 342v1h1v-1zM975 342v1h1v-1zM977 342v1h1v-1zM979 342v1h1v-1zM981 17v1h1v-1zM981 19v1h1v-1zM981 82v1h1v-1zM981 147v1h1v-1zM981 212v1h1v-1zM981 277v1h1v-1zM981 339v1h1v-1zM981 341v3h1v-3zM981 345v1h1v-1zM981 407v1h1v-1zM981 472v1h1v-1zM981 537v1h1v-1zM981 602v1h1v-1zM981 665v1h1v-1zM981 667v1h1v-1zM983 342v1h1v-1zM985 342v1h1v-1zM987 342v1h1v-1zM989 342v1h1v-1zM991 342v1h1v-1zM993 342v1h1v-1zM995 342v1h1v-1zM997 342v1h1v-1zM999 342v1h1v-1zM1001 17v1h1v-1zM1001 19v1h1v-1zM1001 82v1h1v-1zM1001 147v1h1v-1zM1001 212v1h1v-1zM1001 277v1h1v-1zM1001 339v1h1v-1zM1001 341v3h1v-3zM1001 345v1h1v-1zM1001 407v1h1v-1zM1001 472v1h1v-1zM1001 537v1h1v-1zM1001 602v1h1v-1zM1001 665v1h1v-1zM1001 667v1h1v-1zM1003 342v1h1v-1zM1005 342v1h1v-1zM1007 342v1h1v-1zM1009 342v1h1v-1zM1011 342v1h1v-1zM1013 342v1h1v-1zM1015 82v1h1v-1zM1015 147v1h1v-1zM1015 212v1h1v-1zM1015 277v1h1v-1zM1015 342v1h1v-1zM1015 407v1h1v-1zM1015 472v1h1v-1zM1015 537v1h1v-1zM1015 602v1h1v-1zM1017 82v1h1v-1zM1017 147v1h1v-1zM1017 212v1h1v-1zM1017 277v1h1v-1zM1017 342v1h1v-1zM1017 407v1h1v-1zM1017 472v1h1v-1zM1017 537v1h1v-1zM1017 602v1h1v-1zM1018 30v1h1v-1zM1018 43v1h1v-1zM1018 56v1h1v-1zM1018 69v1h1v-1zM1018 95v1h1v-1zM1018 108v1h1v-1zM1018 121v1h1v-1zM1018 134v1h1v-1zM1018 160v1h1v-1zM1018 173v1h1v-1zM1018 186v1h1v-1zM1018 199v1h1v-1zM1018 225v1h1v-1zM1018 238v1h1v-1zM1018 251v1h1v-1zM1018 264v1h1v-1zM1018 290v1h1v-1zM1018 303v1h1v-1zM1018 316v1h1v-1zM1018 329v1h1v-1zM1018 355v1h1v-1zM1018 368v1h1v-1zM1018 381v1h1v-1zM1018 394v1h1v-1zM1018 420v1h1v-1zM1018 433v1h1v-1zM1018 446v1h1v-1zM1018 459v1h1v-1zM1018 485v1h1v-1zM1018 498v1h1v-1zM1018 511v1h1v-1zM1018 524v1h1v-1zM1018 550v1h1v-1zM1018 563v1h1v-1zM1018 576v1h1v-1zM1018 589v1h1v-1zM1018 615v1h1v-1zM1018 628v1h1v-1zM1018 641v1h1v-1zM1018 654v1h1v-1zM1019 82v1h1v-1zM1019 147v1h1v-1zM1019 212v1h1v-1zM1019 277v1h1v-1zM1019 342v1h1v-1zM1019 407v1h1v-1zM1019 472v1h1v-1zM1019 537v1h1v-1zM1019 602v1h1v-1zM1020 30v1h1v-1zM1020 43v1h1v-1zM1020 56v1h1v-1zM1020 69v1h1v-1zM1020 95v1h1v-1zM1020 108v1h1v-1zM1020 121v1h1v-1zM1020 134v1h1v-1zM1020 160v1h1v-1zM1020 173v1h1v-1zM1020 186v1h1v-1zM1020 199v1h1v-1zM1020 225v1h1v-1zM1020 238v1h1v-1zM1020 251v1h1v-1zM1020 264v1h1v-1zM1020 290v1h1v-1zM1020 303v1h1v-1zM1020 316v1h1v-1zM1020 329v1h1v-1zM1020 355v1h1v-1zM1020 368v1h1v-1zM1020 381v1h1v-1zM1020 394v1h1v-1zM1020 420v1h1v-1zM1020 433v1h1v-1zM1020 446v1h1v-1zM1020 459v1h1v-1zM1020 485v1h1v-1zM1020 498v1h1v-1zM1020 511v1h1v-1zM1020 524v1h1v-1zM1020 550v1h1v-1zM1020 563v1h1v-1zM1020 576v1h1v-1zM1020 589v1h1v-1zM1020 615v1h1v-1zM1020 628v1h1v-1zM1020 641v1h1v-1zM1020 654v1h1v-1zM1021 30v1h1v-1zM1021 43v1h1v-1zM1021 56v1h1v-1zM1021 69v1h1v-1zM1021 95v1h1v-1zM1021 108v1h1v-1zM1021 121v1h1v-1zM1021 134v1h1v-1zM1021 160v1h1v-1zM1021 173v1h1v-1zM1021 186v1h1v-1zM1021 199v1h1v-1zM1021 225v1h1v-1zM1021 238v1h1v-1zM1021 251v1h1v-1zM1021 264v1h1v-1zM1021 290v1h1v-1zM1021 303v1h1v-1zM1021 316v1h1v-1zM1021 329v1h1v-1zM1021 336v1h1v-1zM1021 338v1h1v-1zM1021 340v1h1v-1zM1021 344v1h1v-1zM1021 346v1h1v-1zM1021 348v1h1v-1zM1021 355v1h1v-1zM1021 368v1h1v-1zM1021 381v1h1v-1zM1021 394v1h1v-1zM1021 420v1h1v-1zM1021 433v1h1v-1zM1021 446v1h1v-1zM1021 459v1h1v-1zM1021 485v1h1v-1zM1021 498v1h1v-1zM1021 511v1h1v-1zM1021 524v1h1v-1zM1021 550v1h1v-1zM1021 563v1h1v-1zM1021 576v1h1v-1zM1021 589v1h1v-1zM1021 615v1h1v-1zM1021 628v1h1v-1zM1021 641v1h1v-1zM1021 654v1h1v-1z"/>
<rect x="20.5" y="16.5" width="1001" height="652" fill="none" stroke="#5a96d2" stroke-width="1"/>
<!-- record bar -->
<path fill="#5a96d2" d="M121 0h800v1h-800zM121 0h1v16h-1zM920 0h1v16h-1zM121 15h800v2h-800z"/>
<rect x="282" y="7" width="479" height="1" fill="#a000a8"/>
<rect x="519" y="1" width="5" height="14" fill="#ffffff"/>
<rect x="521" y="3" width="1" height="10" fill="#000"/>
<rect x="521" y="3" width="1" height="2" fill="#ff9a00"/>
<path fill="#ff9a00" d="M516 17h11l-5.5 6z"/>
<!-- small T marker in record bar -->
<path fill="#ff9a00" d="M122 10.5l5-5.5h6.5l1 1v9.5l-1 .5h-6.5z" shape-rendering="geometricPrecision"/>
<path fill="#000" d="M127 7h6v2h-2v6h-2v-6h-2z"/>
<!-- T marker in graticule -->
<path fill="#ff9a00" d="M21 30.5l6-6.5h10l1 1v11l-1 1h-10z" shape-rendering="geometricPrecision"/>
<path fill="#000" d="M28 26h8v2h-3v8h-2v-8h-3z"/>
<!-- channel markers -->
<defs><linearGradient id="g3" x1="0" y1="0" x2="0" y2="1"><stop offset="0" stop-color="#c020c8"/><stop offset="1" stop-color="#9000a0"/></linearGradient></defs>
<path fill="url(#g3)" d="M0 71h12.5l7.5 8.5l-7.5 8.5h-12.5z" shape-rendering="geometricPrecision"/>
<path fill="none" stroke="#00ffff" stroke-width="1.5" d="M0.8 179h12l7 7.5l-7 7.5h-12z" shape-rendering="geometricPrecision"/>
<path fill="none" stroke="#20e020" stroke-width="1.5" d="M0.8 659h12l7 7.5l-7 7.5h-12z" shape-rendering="geometricPrecision"/>
</svg>
<!-- channel bar -->
<div class="box" style="left:20px;top:670px;width:555px;height:21px;border-radius:6px;"></div>
<div class="pill" style="left:165px;top:673px;width:25px;height:16px;background:#00e4ec;"></div>
<div class="pill" style="left:304px;top:673px;width:25px;height:16px;background:#a000b0;"></div>
<div class="pill" style="left:443px;top:673px;width:25px;height:16px;background:#10a810;"></div>
<!-- timebase -->
<div class="box" style="left:582px;top:670px;width:148px;height:38px;border-radius:7px;"></div>
<div class="t" style="left:587px;top:691px;width:12px;height:13px;background:#ff9a00;border-radius:2px;"></div>
<svg style="position:absolute;left:587px;top:691px" width="12" height="13"><path d="M1.5 1.6h9v2h-3.3v8.4h-2.4v-8.4h-3.3z" fill="#000"/></svg>
<svg style="position:absolute;left:599px;top:693px" width="24" height="10"><path d="M1 4.5h7" stroke="#ff9a00" stroke-width="1.6"/><path d="M6 1.5l4 3l-4 3z" fill="#ff9a00"/><path d="M11 1h11l-5.5 6z" fill="#ff9a00"/></svg>
<!-- sample rate -->
<div class="box" style="left:737px;top:670px;width:108px;height:38px;border-radius:7px;"></div>
<!-- trigger -->
<div class="box" style="left:851px;top:670px;width:171px;height:39px;border-radius:7px;"></div>
<div class="pill" style="left:882px;top:673px;width:25px;height:16px;background:#f0f000;"></div>
<svg style="position:absolute;left:918px;top:674px" width="16" height="14"><path d="M1.5 11.5h4l4-9h4" fill="none" stroke="#fff" stroke-width="2"/></svg>
<!-- purple tab -->
<div style="position:absolute;left:0;top:714px;width:17px;height:54px;background:#a000a8;border-radius:0 6px 6px 0;"></div>
<!-- buttons -->
<div class="btn" style="left:20px;"></div>
<div class="t" style="left:33px;top:742px;width:30px;height:26px;box-sizing:border-box;background:#0a6cf5;border:1px solid #c8dcff;border-radius:3px;"></div>
<div class="t" style="left:90px;top:742px;width:30px;height:26px;background:#333333;"></div>
<div class="btn" style="left:138px;"></div>
<div class="t" style="left:202px;top:742px;width:42px;height:26px;box-sizing:border-box;background:#0a6cf5;border:1px solid #c8dcff;border-radius:3px;"></div>
<div class="btn" style="left:256px;"></div>
<div class="t" style="left:325px;top:742px;width:33px;height:26px;box-sizing:border-box;background:#0a6cf5;border:1px solid #c8dcff;border-radius:3px;"></div>
<div class="btn" style="left:374px;"></div>
<div class="t" style="left:401px;top:742px;width:60px;height:16px;background:#0a6cf5;"></div>
<div class="btn" style="left:492px;"></div>
<div class="pill" style="left:514px;top:733px;width:25px;height:16px;background:#a000a8;"></div>
<div class="btn" style="left:728px;border-bottom:2px solid #6a6a6a;"></div>
<svg style="position:absolute;left:773px;top:726px" width="24" height="13"><defs><linearGradient id="mg" x1="0" y1="0" x2="0" y2="1"><stop offset="0" stop-color="#f0f0f0"/><stop offset="0.7" stop-color="#e6e6e6"/><stop offset="0.8" stop-color="#8a8a8a"/><stop offset="1" stop-color="#e0e0e0"/></linearGradient></defs><path d="M0.5 12L11.5 1L22.5 12z" fill="url(#mg)"/></svg>
<!-- date -->
<div class="box" style="left:909px;top:729px;width:113px;height:37px;border-radius:6px;border-color:#cccccc;"></div>
<svg style="position:absolute;left:0;top:0" width="1024" height="768" shape-rendering="geometricPrecision"><path transform="translate(0,0)" fill="none" stroke="#00e8f0" stroke-width="1.25" stroke-linejoin="miter" d="M270 684.9h3v-1.6l-2.6-2.8v-2.6l2.2-2.3h3.9l2.2 2.3v2.6l-2.6 2.8v1.6h3M283.6 675.4h3l1 1v1.4l-1 .6h-3M286.6 678.4l1.2.8v1.3l-.9.9h-3.3V675.4"/><path transform="translate(0,0)" fill="none" stroke="#00e8f0" stroke-width="1.2" d="M288.6 680v4.6l.9 .9l.9-.9v-3.2M290.4 684.6l.9 .9l.9-.9v-5.4"/><path transform="translate(139,0)" fill="none" stroke="#b000c0" stroke-width="1.25" stroke-linejoin="miter" d="M270 684.9h3v-1.6l-2.6-2.8v-2.6l2.2-2.3h3.9l2.2 2.3v2.6l-2.6 2.8v1.6h3M283.6 675.4h3l1 1v1.4l-1 .6h-3M286.6 678.4l1.2.8v1.3l-.9.9h-3.3V675.4"/><path transform="translate(139,0)" fill="none" stroke="#b000c0" stroke-width="1.2" d="M288.6 680v4.6l.9 .9l.9-.9v-3.2M290.4 684.6l.9 .9l.9-.9v-5.4"/><path transform="translate(278,0)" fill="none" stroke="#10b010" stroke-width="1.25" stroke-linejoin="miter" d="M270 684.9h3v-1.6l-2.6-2.8v-2.6l2.2-2.3h3.9l2.2 2.3v2.6l-2.6 2.8v1.6h3M283.6 675.4h3l1 1v1.4l-1 .6h-3M286.6 678.4l1.2.8v1.3l-.9.9h-3.3V675.4"/><path transform="translate(278,0)" fill="none" stroke="#10b010" stroke-width="1.2" d="M288.6 680v4.6l.9 .9l.9-.9v-3.2M290.4 684.6l.9 .9l.9-.9v-5.4"/><path fill="none" stroke="#10b010" stroke-width="1.4" d="M478.5 676v9M475.3 681.8l3.2 3.6l3.2-3.6"/></svg>
<div class="t" style="left:0px;top:-2px;font-family:'Liberation Serif',serif;font-size:21px;letter-spacing:-0.5px;color:#ffffff;-webkit-text-stroke:0.6px currentColor;">Tek</div>
<div class="t" style="left:35px;top:-1px;font-family:'Liberation Sans',sans-serif;font-size:15px;letter-spacing:1.5px;color:#ffffff;-webkit-text-stroke:0.35px currentColor;">Run</div>
<div class="t" style="left:925px;top:0px;font-family:'Liberation Sans',sans-serif;font-size:15px;letter-spacing:1.25px;color:#ffffff;-webkit-text-stroke:0.35px currentColor;">Trig?</div>
<div class="t" style="left:208px;top:672px;font-family:'Liberation Sans',sans-serif;font-size:15px;letter-spacing:1.4px;color:#00e8f0;-webkit-text-stroke:0.35px currentColor;">200mV</div>
<div class="t" style="left:347px;top:672px;font-family:'Liberation Sans',sans-serif;font-size:15px;letter-spacing:1.28px;color:#b000c0;-webkit-text-stroke:0.35px currentColor;">200mV</div>
<div class="t" style="left:486px;top:672px;font-family:'Liberation Sans',sans-serif;font-size:15px;letter-spacing:1.25px;color:#10b010;-webkit-text-stroke:0.35px currentColor;">100mV</div>
<div class="t" style="left:589px;top:672px;font-family:'Liberation Sans',sans-serif;font-size:15px;letter-spacing:1.68px;color:#ffffff;-webkit-text-stroke:0.35px currentColor;">2.00μs</div>
<div class="t" style="left:624px;top:689px;font-family:'Liberation Sans',sans-serif;font-size:15px;letter-spacing:1.49px;color:#ff9a00;-webkit-text-stroke:0.35px currentColor;">1.806000ms</div>
<div class="t" style="left:743px;top:674px;font-family:'Liberation Sans',sans-serif;font-size:15px;letter-spacing:1.3px;color:#ffffff;-webkit-text-stroke:0.35px currentColor;">2.50GS/s</div>
<div class="t" style="left:743px;top:690px;font-family:'Liberation Sans',sans-serif;font-size:15px;letter-spacing:1.88px;color:#ffffff;-webkit-text-stroke:0.35px currentColor;">5M points</div>
<div class="t" style="left:966px;top:672px;font-family:'Liberation Sans',sans-serif;font-size:15px;letter-spacing:1.18px;color:#ffffff;-webkit-text-stroke:0.35px currentColor;">2.10 V</div>
<div class="t" style="left:42px;top:720px;font-family:'Liberation Sans',sans-serif;font-size:15px;letter-spacing:1.83px;color:#ffffff;-webkit-text-stroke:0.35px currentColor;">Coupling</div>
<div class="t" style="left:37px;top:746px;font-family:'Liberation Sans',sans-serif;font-size:15px;letter-spacing:0.6px;color:#ffffff;-webkit-text-stroke:0.35px currentColor;">DC</div>
<div class="t" style="left:95px;top:746px;font-family:'Liberation Sans',sans-serif;font-size:15px;letter-spacing:0.2px;color:#6c6c6c;-webkit-text-stroke:0.35px currentColor;">AC</div>
<div class="t" style="left:148px;top:720px;font-family:'Liberation Sans',sans-serif;font-size:15px;letter-spacing:1.82px;color:#ffffff;-webkit-text-stroke:0.35px currentColor;">Termination</div>
<div class="t" style="left:149px;top:746px;font-family:'Liberation Sans',sans-serif;font-size:15px;letter-spacing:2.25px;color:#ffffff;-webkit-text-stroke:0.35px currentColor;">1MΩ</div>
<div class="t" style="left:207px;top:746px;font-family:'Liberation Sans',sans-serif;font-size:15px;letter-spacing:1.8px;color:#ffffff;-webkit-text-stroke:0.35px currentColor;">50Ω</div>
<div class="t" style="left:289px;top:719px;font-family:'Liberation Sans',sans-serif;font-size:15px;letter-spacing:2.06px;color:#ffffff;-webkit-text-stroke:0.35px currentColor;">Invert</div>
<div class="t" style="left:273px;top:746px;font-family:'Liberation Sans',sans-serif;font-size:15px;letter-spacing:2.2px;color:#ffffff;-webkit-text-stroke:0.35px currentColor;">On</div>
<div class="t" style="left:330px;top:747px;font-family:'Liberation Sans',sans-serif;font-size:15px;letter-spacing:2.15px;color:#ffffff;-webkit-text-stroke:0.35px currentColor;">Off</div>
<div class="t" style="left:389px;top:724px;font-family:'Liberation Sans',sans-serif;font-size:15px;letter-spacing:1.77px;color:#ffffff;-webkit-text-stroke:0.35px currentColor;">Bandwidth</div>
<div class="t" style="left:405px;top:741px;font-family:'Liberation Sans',sans-serif;font-size:15px;letter-spacing:1.58px;color:#ffffff;-webkit-text-stroke:0.35px currentColor;">20MHz</div>
<div class="t" style="left:546px;top:732px;font-family:'Liberation Sans',sans-serif;font-size:15px;letter-spacing:0.88px;color:#ffffff;-webkit-text-stroke:0.35px currentColor;">Label</div>
<div class="t" style="left:766px;top:739px;font-family:'Liberation Sans',sans-serif;font-size:15px;letter-spacing:1.73px;color:#ffffff;-webkit-text-stroke:0.35px currentColor;">More</div>
<div class="t" style="left:916px;top:732px;font-family:'Liberation Sans',sans-serif;font-size:15px;letter-spacing:1.53px;color:#ffffff;-webkit-text-stroke:0.35px currentColor;">23 Nov 2023</div>
<div class="t" style="left:915px;top:748px;font-family:'Liberation Sans',sans-serif;font-size:15px;letter-spacing:1.63px;color:#ffffff;-webkit-text-stroke:0.35px currentColor;">12:55:20</div>
<div class="t" style="left:174px;top:674px;font-family:'Liberation Sans',sans-serif;font-size:14px;letter-spacing:0.0px;color:#000;font-weight:bold;">2</div>
<div class="t" style="left:313px;top:674px;font-family:'Liberation Sans',sans-serif;font-size:14px;letter-spacing:0.0px;color:#000;font-weight:bold;">3</div>
<div class="t" style="left:452px;top:674px;font-family:'Liberation Sans',sans-serif;font-size:14px;letter-spacing:0.0px;color:#000;font-weight:bold;">4</div>
<div class="t" style="left:523px;top:733px;font-family:'Liberation Sans',sans-serif;font-size:14px;letter-spacing:0.0px;color:#000;font-weight:bold;">3</div>
<div class="t" style="left:890px;top:674px;font-family:'Liberation Sans',sans-serif;font-size:14px;letter-spacing:0.0px;color:#000;font-weight:bold;">1</div>
<div class="t" style="left:5px;top:734px;font-family:'Liberation Sans',sans-serif;font-size:15px;letter-spacing:0.0px;color:#000;-webkit-text-stroke:0.35px currentColor;">3</div>
<div class="t" style="left:4px;top:72px;font-family:'Liberation Sans',sans-serif;font-size:14px;letter-spacing:0.0px;color:#000;-webkit-text-stroke:0.35px currentColor;">3</div>
<div class="t" style="left:4px;top:179px;font-family:'Liberation Sans',sans-serif;font-size:14px;letter-spacing:0.0px;color:#00f0f0;-webkit-text-stroke:0.35px currentColor;">2</div>
<div class="t" style="left:4px;top:659px;font-family:'Liberation Sans',sans-serif;font-size:14px;letter-spacing:0.0px;color:#20d820;-webkit-text-stroke:0.35px currentColor;">4</div>
</body></html>
